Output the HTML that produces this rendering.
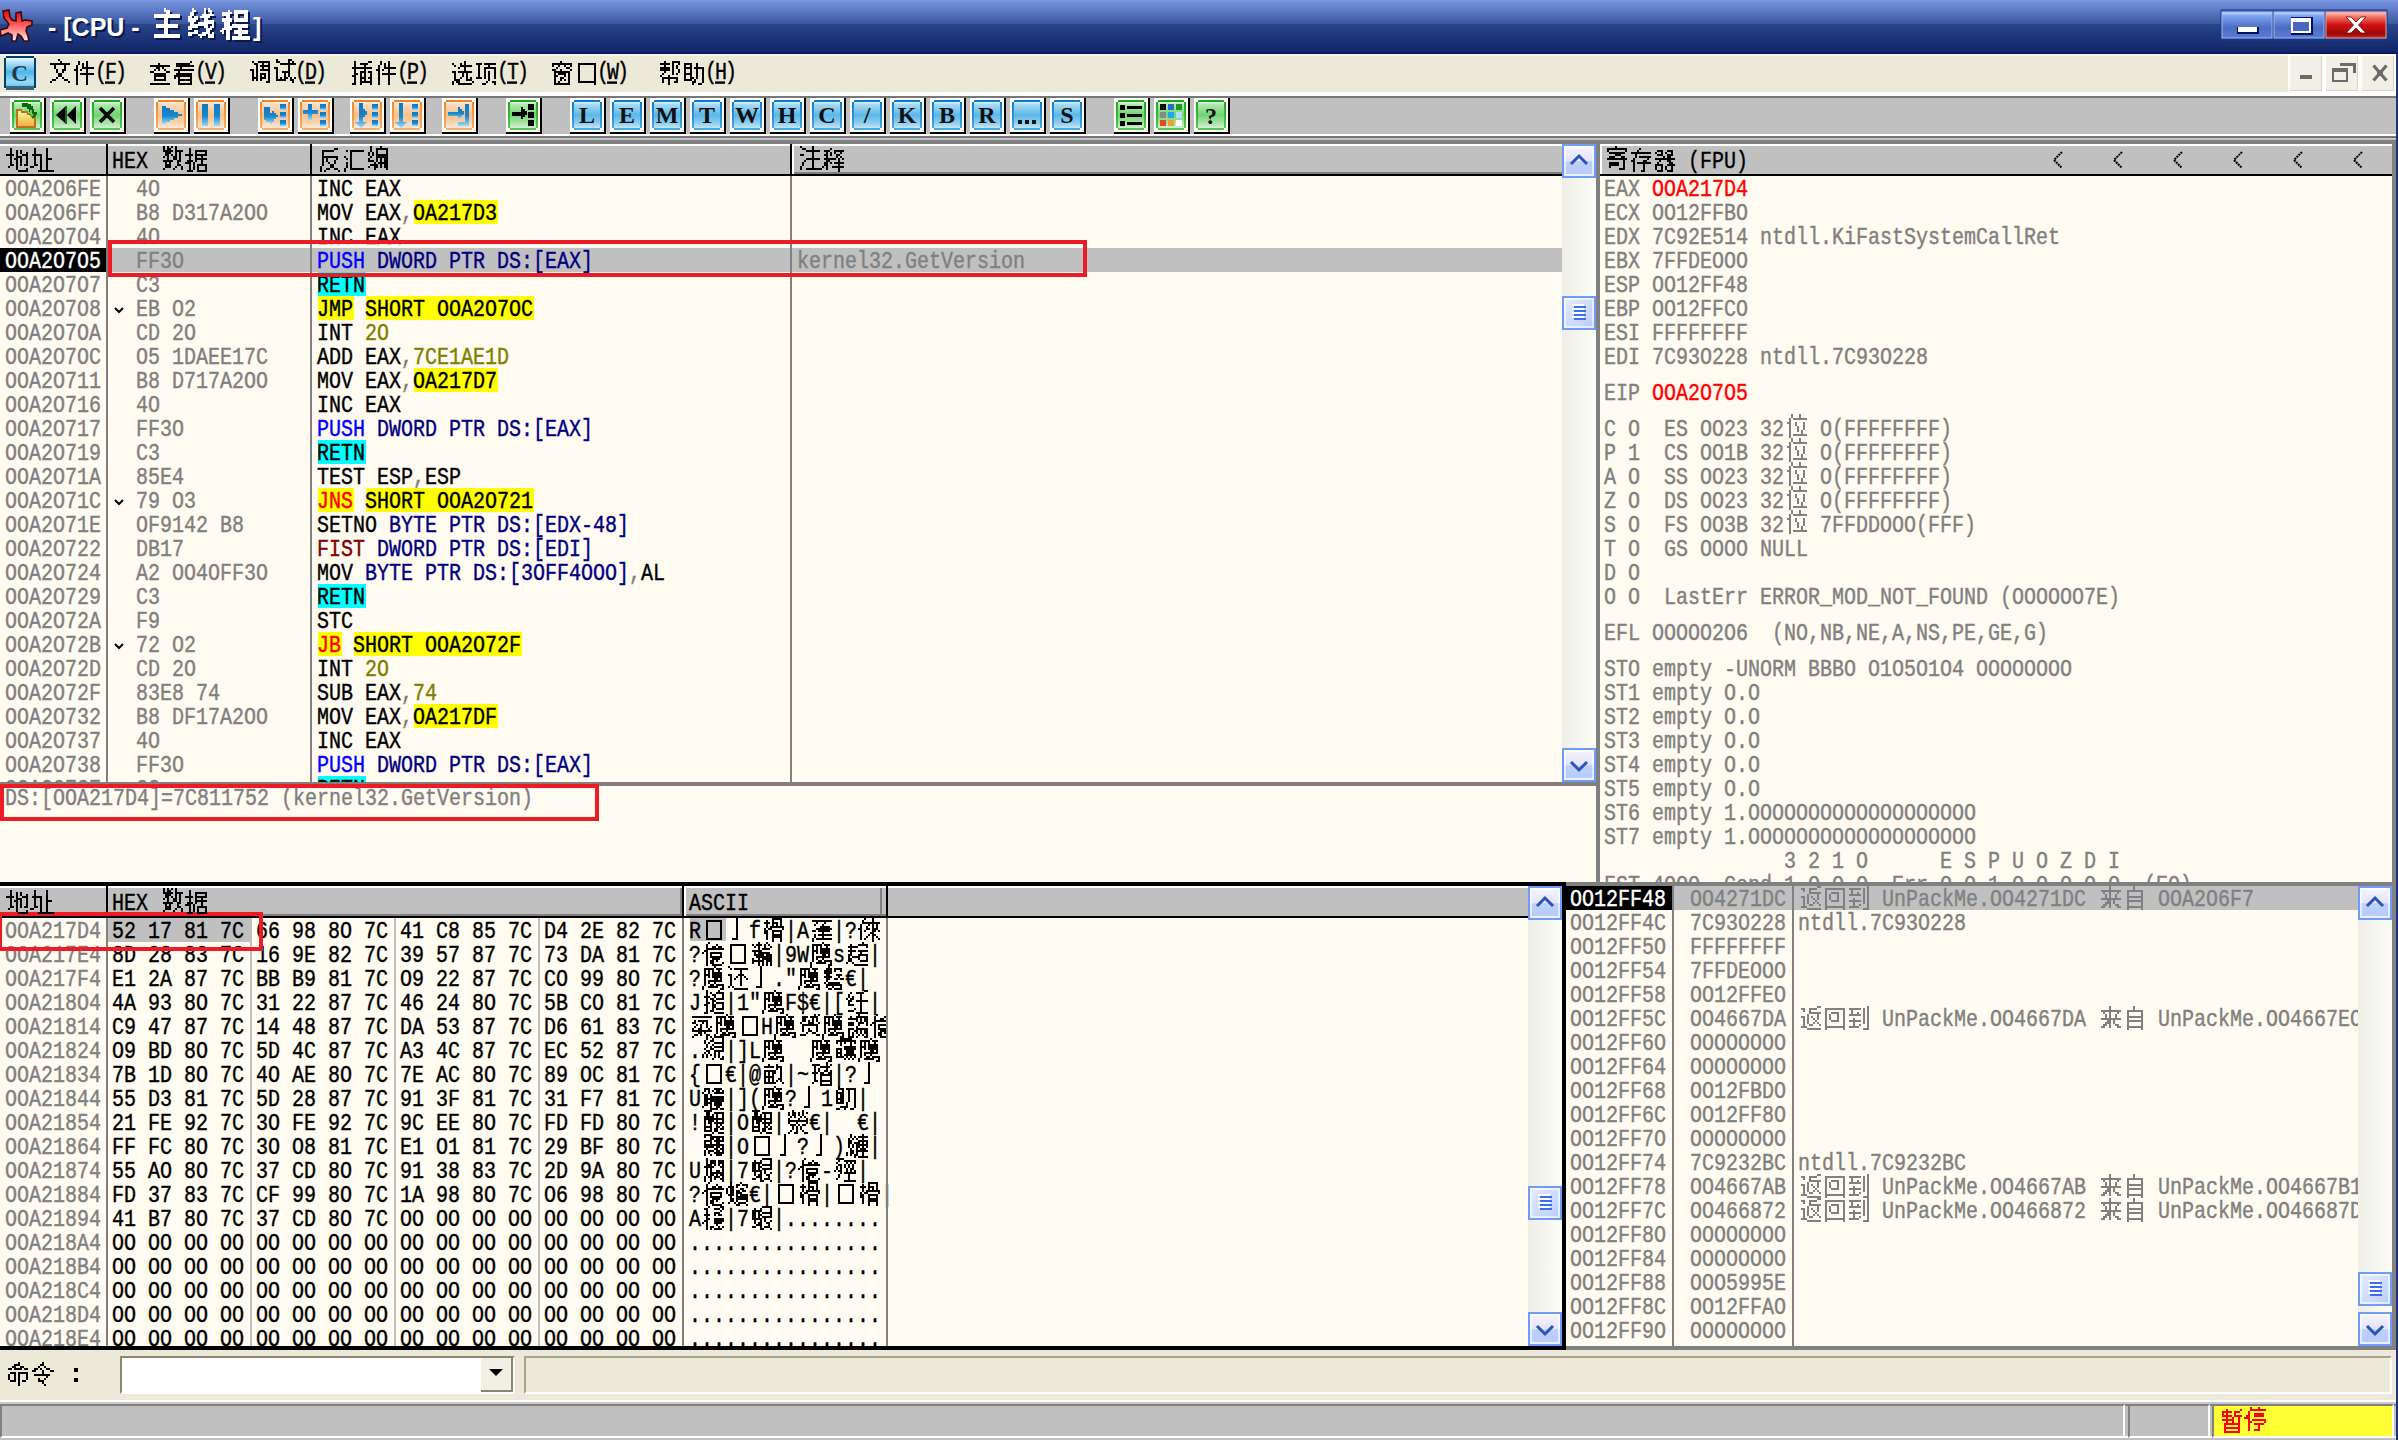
<!DOCTYPE html><html><head><meta charset="utf-8"><title>CPU</title><style>*{margin:0;padding:0}
html,body{width:2398px;height:1440px;overflow:hidden;background:#ECE9D8}
body{position:relative}
.a{position:absolute;box-sizing:content-box}
.t{position:absolute;font-family:"Liberation Mono",monospace;font-size:20px;line-height:20px;white-space:pre;-webkit-text-stroke-width:0.35px;transform:scaleY(1.2);transform-origin:0 0}
u{text-decoration:underline;text-underline-offset:2px}
</style></head><body><svg class="a" style="left:0;top:0" width="0" height="0"><defs><linearGradient id="sbt" x1="0" y1="0" x2="1" y2="0"><stop offset="0" stop-color="#EEEDE6"/><stop offset="1" stop-color="#FDFDF8"/></linearGradient>
<linearGradient id="sbb" x1="0" y1="0" x2="0" y2="1"><stop offset="0" stop-color="#FFFFFF"/><stop offset="0.12" stop-color="#F2F0FC"/><stop offset="0.5" stop-color="#E4E4FA"/><stop offset="0.52" stop-color="#BED0FA"/><stop offset="0.88" stop-color="#B8CAF8"/><stop offset="1" stop-color="#E0E8FC"/></linearGradient>
<linearGradient id="sbth" x1="0" y1="0" x2="1" y2="1"><stop offset="0" stop-color="#E8ECFC"/><stop offset="1" stop-color="#B8CCF8"/></linearGradient></defs></svg><div class="a" style="left:0;top:0;width:2398px;height:54px;background:linear-gradient(to bottom,#7B9BE2 0px,#6F8BD6 3px,#5F7DC8 10px,#4C68B4 17px,#3A5A9C 23.5px,#2A468B 24px,#233E83 30px,#1A3276 40px,#13286B 51px,#0A1B60 53px,#001060 54px)"></div><svg class="a" style="left:0;top:0" width="34" height="44" viewBox="0 0 34 44">
<defs><linearGradient id="bug" x1="0" y1="10" x2="0" y2="41" gradientUnits="userSpaceOnUse"><stop offset="0" stop-color="#E80000"/><stop offset="0.5" stop-color="#FF6060"/><stop offset="1" stop-color="#FFE8E8"/></linearGradient></defs>
<path d="M3 11 L9 10 L10 17 L12 20 L16 21 L16 13 L21 12 L22 21 L25 20 L32 21 L32 25 L27 27 L26 31 L28 36 L29 41 L24 41 L21 36 L18 34 L16 41 L12 41 L12 35 L8 33 L1 36 L0 30 L7 28 L9 24 L4 18 Z" fill="url(#bug)" stroke="#3A0A0A" stroke-width="1.6"/>
</svg><div class="a" style="left:50px;top:14px;font:bold 25px/30px 'Liberation Sans',sans-serif;color:#0A1850;white-space:pre">- [CPU -</div><div class="a" style="left:255px;top:14px;font:bold 25px/30px 'Liberation Sans',sans-serif;color:#0A1850;white-space:pre">]</div><div class="a" style="left:48px;top:12px;font:bold 25px/30px 'Liberation Sans',sans-serif;color:#FFFFFF;white-space:pre">- [CPU -</div><div class="a" style="left:253px;top:12px;font:bold 25px/30px 'Liberation Sans',sans-serif;color:#FFFFFF;white-space:pre">]</div><svg class="a" style="left:154px;top:10px" width="34" height="34"><path fill="#0A1850" d="M12 0h2v2h-2zM12 2h6v2h-6zM14 4h4v2h-4zM2 6h26v2h-26zM2 8h26v2h-26zM12 10h4v2h-4zM12 12h4v2h-4zM12 14h4v2h-4zM4 16h22v2h-22zM4 18h22v2h-22zM12 20h4v2h-4zM12 22h4v2h-4zM12 24h4v2h-4zM2 26h26v2h-26zM2 28h26v2h-26z"/></svg><svg class="a" style="left:188px;top:10px" width="34" height="34"><path fill="#0A1850" d="M6 0h2v2h-2zM18 0h2v2h-2zM22 0h2v2h-2zM6 2h4v2h-4zM18 2h2v2h-2zM22 2h4v2h-4zM4 4h4v2h-4zM18 4h2v2h-2zM24 4h2v2h-2zM4 6h4v2h-4zM16 6h12v2h-12zM2 8h4v2h-4zM8 8h4v2h-4zM14 8h10v2h-10zM2 10h10v2h-10zM18 10h4v2h-4zM2 12h8v2h-8zM18 12h10v2h-10zM4 14h4v2h-4zM12 14h16v2h-16zM4 16h18v2h-18zM26 16h2v2h-2zM2 18h10v2h-10zM18 18h4v2h-4zM24 18h4v2h-4zM2 20h4v2h-4zM20 20h6v2h-6zM8 22h4v2h-4zM20 22h4v2h-4zM2 24h10v2h-10zM16 24h8v2h-8zM26 24h2v2h-2zM2 26h4v2h-4zM12 26h8v2h-8zM22 26h6v2h-6zM14 28h2v2h-2zM22 28h6v2h-6z"/></svg><svg class="a" style="left:222px;top:10px" width="34" height="34"><path fill="#0A1850" d="M8 2h2v2h-2zM14 2h14v2h-14zM2 4h10v2h-10zM14 4h14v2h-14zM2 6h8v2h-8zM14 6h4v2h-4zM24 6h4v2h-4zM6 8h4v2h-4zM14 8h4v2h-4zM24 8h4v2h-4zM2 10h10v2h-10zM14 10h14v2h-14zM2 12h10v2h-10zM14 12h14v2h-14zM4 14h6v2h-6zM4 16h6v2h-6zM12 16h16v2h-16zM4 18h24v2h-24zM2 20h10v2h-10zM18 20h4v2h-4zM0 22h4v2h-4zM6 22h4v2h-4zM14 22h14v2h-14zM2 24h2v2h-2zM6 24h4v2h-4zM14 24h14v2h-14zM6 26h4v2h-4zM18 26h4v2h-4zM6 28h4v2h-4zM12 28h18v2h-18zM6 30h4v2h-4zM12 30h18v2h-18z"/></svg><svg class="a" style="left:152px;top:8px" width="34" height="34"><path fill="#FFFFFF" d="M12 0h2v2h-2zM12 2h6v2h-6zM14 4h4v2h-4zM2 6h26v2h-26zM2 8h26v2h-26zM12 10h4v2h-4zM12 12h4v2h-4zM12 14h4v2h-4zM4 16h22v2h-22zM4 18h22v2h-22zM12 20h4v2h-4zM12 22h4v2h-4zM12 24h4v2h-4zM2 26h26v2h-26zM2 28h26v2h-26z"/></svg><svg class="a" style="left:186px;top:8px" width="34" height="34"><path fill="#FFFFFF" d="M6 0h2v2h-2zM18 0h2v2h-2zM22 0h2v2h-2zM6 2h4v2h-4zM18 2h2v2h-2zM22 2h4v2h-4zM4 4h4v2h-4zM18 4h2v2h-2zM24 4h2v2h-2zM4 6h4v2h-4zM16 6h12v2h-12zM2 8h4v2h-4zM8 8h4v2h-4zM14 8h10v2h-10zM2 10h10v2h-10zM18 10h4v2h-4zM2 12h8v2h-8zM18 12h10v2h-10zM4 14h4v2h-4zM12 14h16v2h-16zM4 16h18v2h-18zM26 16h2v2h-2zM2 18h10v2h-10zM18 18h4v2h-4zM24 18h4v2h-4zM2 20h4v2h-4zM20 20h6v2h-6zM8 22h4v2h-4zM20 22h4v2h-4zM2 24h10v2h-10zM16 24h8v2h-8zM26 24h2v2h-2zM2 26h4v2h-4zM12 26h8v2h-8zM22 26h6v2h-6zM14 28h2v2h-2zM22 28h6v2h-6z"/></svg><svg class="a" style="left:220px;top:8px" width="34" height="34"><path fill="#FFFFFF" d="M8 2h2v2h-2zM14 2h14v2h-14zM2 4h10v2h-10zM14 4h14v2h-14zM2 6h8v2h-8zM14 6h4v2h-4zM24 6h4v2h-4zM6 8h4v2h-4zM14 8h4v2h-4zM24 8h4v2h-4zM2 10h10v2h-10zM14 10h14v2h-14zM2 12h10v2h-10zM14 12h14v2h-14zM4 14h6v2h-6zM4 16h6v2h-6zM12 16h16v2h-16zM4 18h24v2h-24zM2 20h10v2h-10zM18 20h4v2h-4zM0 22h4v2h-4zM6 22h4v2h-4zM14 22h14v2h-14zM2 24h2v2h-2zM6 24h4v2h-4zM14 24h14v2h-14zM6 26h4v2h-4zM18 26h4v2h-4zM6 28h4v2h-4zM12 28h18v2h-18zM6 30h4v2h-4zM12 30h18v2h-18z"/></svg><svg class="a" style="left:2218px;top:8px" width="172" height="34" viewBox="0 0 172 34">
<defs>
<linearGradient id="wb" x1="0" y1="0" x2="0" y2="1"><stop offset="0" stop-color="#C8DCFF"/><stop offset="0.15" stop-color="#7FA2F0"/><stop offset="0.6" stop-color="#4D6CC4"/><stop offset="1" stop-color="#5A7CD6"/></linearGradient>
<linearGradient id="wc" x1="0" y1="0" x2="0" y2="1"><stop offset="0" stop-color="#FFC8C0"/><stop offset="0.2" stop-color="#F07060"/><stop offset="0.5" stop-color="#D01010"/><stop offset="0.85" stop-color="#9A0808"/><stop offset="1" stop-color="#C03030"/></linearGradient>
</defs>
<rect x="2" y="1" width="168" height="32" rx="2" fill="#1B3A8C" opacity="0.6"/>
<rect x="4" y="4" width="50" height="26" fill="url(#wb)" stroke="#9DB8F2" stroke-width="1"/>
<rect x="56" y="4" width="50" height="26" fill="url(#wb)" stroke="#9DB8F2" stroke-width="1"/>
<rect x="108" y="4" width="60" height="26" fill="url(#wc)" stroke="#F0A0A0" stroke-width="1"/>
<rect x="19" y="19" width="22" height="7" fill="#001060"/><rect x="20" y="19" width="19" height="5" fill="#fff"/>
<rect x="73" y="9" width="22" height="18" fill="#001060"/><rect x="73" y="10" width="20" height="15" fill="#fff"/><rect x="75" y="14" width="16" height="9" fill="#4A66BE"/>
<path d="M128 9 L133 9 L138 14 L143 9 L148 9 L140.5 17 L148 25 L143 25 L138 20 L133 25 L128 25 L135.5 17 Z" fill="#fff" stroke="#700000" stroke-width="0.8"/>
</svg><div class="a" style="left:2396px;top:54px;width:2px;height:1386px;background:#1F3278;"></div><div class="a" style="left:0px;top:54px;width:2396px;height:38px;background:#ECE9D8;"></div><div class="a" style="left:0px;top:54px;width:2396px;height:2px;background:#F8F5E6;"></div><svg class="a" style="left:4px;top:56px" width="32" height="34" viewBox="0 0 32 34">
<defs><linearGradient id="ci" x1="0" y1="0" x2="0" y2="1"><stop offset="0" stop-color="#E6F6FE"/><stop offset="0.15" stop-color="#B8E2F8"/><stop offset="0.5" stop-color="#4DB5EA"/><stop offset="0.85" stop-color="#9ED8F4"/><stop offset="1" stop-color="#6CC8F2"/></linearGradient></defs>
<rect x="2" y="0" width="28" height="34" fill="#003F66"/><rect x="0" y="2" width="32" height="30" fill="#003F66"/>
<rect x="2" y="2" width="28" height="28" fill="url(#ci)"/>
<rect x="2" y="30" width="28" height="4" fill="#3E6577"/>
<text x="15.5" y="25" text-anchor="middle" font-family="Liberation Serif" font-weight="bold" font-size="23" fill="#243848">C</text>
</svg><div class="t" style="left:95px;top:61px;color:#000;letter-spacing:-2px">(<u>F</u>)</div><div class="t" style="left:195px;top:61px;color:#000;letter-spacing:-2px">(<u>V</u>)</div><div class="t" style="left:295px;top:61px;color:#000;letter-spacing:-2px">(<u>D</u>)</div><div class="t" style="left:397px;top:61px;color:#000;letter-spacing:-2px">(<u>P</u>)</div><div class="t" style="left:497px;top:61px;color:#000;letter-spacing:-2px">(<u>T</u>)</div><div class="t" style="left:597px;top:61px;color:#000;letter-spacing:-2px">(<u>W</u>)</div><div class="t" style="left:705px;top:61px;color:#000;letter-spacing:-2px">(<u>H</u>)</div><div class="a" style="left:2288px;top:54px;width:108px;height:38px;background:#FFFFFF;"></div><div class="a" style="left:2290px;top:56px;width:31px;height:34px;background:#F2F0E6;border-right:1px solid #D8D5C8;border-bottom:1px solid #D8D5C8"></div><div class="a" style="left:2326px;top:56px;width:31px;height:34px;background:#F2F0E6;border-right:1px solid #D8D5C8;border-bottom:1px solid #D8D5C8"></div><div class="a" style="left:2362px;top:56px;width:31px;height:34px;background:#F2F0E6;border-right:1px solid #D8D5C8;border-bottom:1px solid #D8D5C8"></div><svg class="a" style="left:2290px;top:56px" width="106" height="34" viewBox="0 0 106 34">
<rect x="10" y="19" width="12" height="4" fill="#6B6B6B"/>
<rect x="50" y="7" width="16" height="3" fill="#6B6B6B"/><rect x="63" y="7" width="3" height="10" fill="#6B6B6B"/>
<rect x="43" y="13" width="14" height="12" fill="none" stroke="#6B6B6B" stroke-width="2"/><rect x="43" y="13" width="14" height="3" fill="#6B6B6B"/>
<path d="M83.5 9.5 L96.5 24.5 M96.5 9.5 L83.5 24.5" stroke="#6B6B6B" stroke-width="3.2"/><rect x="87" y="14" width="6" height="6" fill="#6B6B6B"/>
</svg><div class="a" style="left:2394px;top:54px;width:2px;height:38px;background:#FFFFFF;"></div><div class="a" style="left:0px;top:92px;width:2396px;height:4px;background:#FFFFFF;"></div><div class="a" style="left:0px;top:96px;width:2396px;height:2px;background:#777777;"></div><div class="a" style="left:0px;top:98px;width:2396px;height:36px;background:#C0C0C0;"></div><div class="a" style="left:0px;top:134px;width:2396px;height:2px;background:#FFFFFF;"></div><div class="a" style="left:0px;top:136px;width:2396px;height:2px;background:#777777;"></div><div class="a" style="left:0px;top:138px;width:2396px;height:2px;background:#C4C4C4;"></div><div class="a" style="left:0px;top:140px;width:2396px;height:4px;background:#808080;"></div><svg class="a" style="left:0;top:0" width="0" height="0"><defs><linearGradient id="tbg" x1="0" y1="0" x2="0" y2="1"><stop offset="0" stop-color="#12A812"/><stop offset="1" stop-color="#58C858"/></linearGradient><linearGradient id="tgg" x1="0" y1="0" x2="0" y2="1"><stop offset="0" stop-color="#E8F8E8"/><stop offset="0.1" stop-color="#B0E8B0"/><stop offset="0.5" stop-color="#70D470"/><stop offset="0.8" stop-color="#A8E4A8"/><stop offset="1" stop-color="#D0F2D0"/></linearGradient><linearGradient id="tbo" x1="0" y1="0" x2="0" y2="1"><stop offset="0" stop-color="#F08220"/><stop offset="1" stop-color="#F6B070"/></linearGradient><linearGradient id="tgo" x1="0" y1="0" x2="0" y2="1"><stop offset="0" stop-color="#FDF2E6"/><stop offset="0.1" stop-color="#FADCC0"/><stop offset="0.5" stop-color="#F8C08A"/><stop offset="0.8" stop-color="#FAD4B0"/><stop offset="1" stop-color="#FDEAD8"/></linearGradient><linearGradient id="tbb" x1="0" y1="0" x2="0" y2="1"><stop offset="0" stop-color="#0A7AC8"/><stop offset="1" stop-color="#4AAAE2"/></linearGradient><linearGradient id="tgb" x1="0" y1="0" x2="0" y2="1"><stop offset="0" stop-color="#DCF2FC"/><stop offset="0.1" stop-color="#A8DAF4"/><stop offset="0.5" stop-color="#5CB8E8"/><stop offset="0.8" stop-color="#8CCCF0"/><stop offset="1" stop-color="#C4E6F8"/></linearGradient><linearGradient id="tbl" x1="0" y1="0" x2="0" y2="1"><stop offset="0" stop-color="#0E78C4"/><stop offset="0.55" stop-color="#1A86CC"/><stop offset="1" stop-color="#9ADCFF"/></linearGradient><linearGradient id="tfo" x1="0" y1="0" x2="0" y2="1"><stop offset="0" stop-color="#FFF6A0"/><stop offset="1" stop-color="#F0B040"/></linearGradient></defs></svg><div class="a" style="left:10px;top:98px;width:34px;height:34px;border-top:2px solid #fff;border-left:2px solid #fff;background:#FFFBF0"></div><div class="a" style="left:44px;top:98px;width:2px;height:36px;background:#000;"></div><div class="a" style="left:10px;top:132px;width:36px;height:2px;background:#000;"></div><svg class="a" style="left:12px;top:100px" width="30" height="30" viewBox="0 0 30 30"><path d="M2 0H28V2H30V28H28V30H2V28H0V2H2Z" fill="url(#tbg)"/><rect x="2" y="2" width="26" height="26" fill="url(#tgg)"/><path d="M4 9H10V11H16V13H24V28H4Z" fill="#C07018"/><path d="M6 11H9V13H15V15H22V26H6Z" fill="url(#tfo)"/><path d="M10 3H16V4H19V6H21V9H22V12H25V14L21 19L17 14H19V12H17V9H15V7H10Z" fill="#0A6A0A"/><path d="M18 10H20V14H22L20 17L18 14Z" fill="#60D060"/></svg><div class="a" style="left:50px;top:98px;width:34px;height:34px;border-top:2px solid #fff;border-left:2px solid #fff;background:#FFFBF0"></div><div class="a" style="left:84px;top:98px;width:2px;height:36px;background:#000;"></div><div class="a" style="left:50px;top:132px;width:36px;height:2px;background:#000;"></div><svg class="a" style="left:52px;top:100px" width="30" height="30" viewBox="0 0 30 30"><path d="M2 0H28V2H30V28H28V30H2V28H0V2H2Z" fill="url(#tbg)"/><rect x="2" y="2" width="26" height="26" fill="url(#tgg)"/><path d="M4 15L14 6V24Z M15 15L24 6V24Z" fill="#000"/><rect x="13" y="6" width="2" height="18" fill="#2A5A2A"/></svg><div class="a" style="left:90px;top:98px;width:34px;height:34px;border-top:2px solid #fff;border-left:2px solid #fff;background:#FFFBF0"></div><div class="a" style="left:124px;top:98px;width:2px;height:36px;background:#000;"></div><div class="a" style="left:90px;top:132px;width:36px;height:2px;background:#000;"></div><svg class="a" style="left:92px;top:100px" width="30" height="30" viewBox="0 0 30 30"><path d="M2 0H28V2H30V28H28V30H2V28H0V2H2Z" fill="url(#tbg)"/><rect x="2" y="2" width="26" height="26" fill="url(#tgg)"/><path d="M8 8L22 22M22 8L8 22" stroke="#000" stroke-width="3.5"/></svg><div class="a" style="left:154px;top:98px;width:34px;height:34px;border-top:2px solid #fff;border-left:2px solid #fff;background:#FFFBF0"></div><div class="a" style="left:188px;top:98px;width:2px;height:36px;background:#000;"></div><div class="a" style="left:154px;top:132px;width:36px;height:2px;background:#000;"></div><svg class="a" style="left:156px;top:100px" width="30" height="30" viewBox="0 0 30 30"><path d="M2 0H28V2H30V28H28V30H2V28H0V2H2Z" fill="url(#tbo)"/><rect x="2" y="2" width="26" height="26" fill="url(#tgo)"/><path d="M6 6H10V8H14V10H18V12H22V14H26V16H22V18H18V20H14V22H10V24H6Z" fill="url(#tbl)"/></svg><div class="a" style="left:194px;top:98px;width:34px;height:34px;border-top:2px solid #fff;border-left:2px solid #fff;background:#FFFBF0"></div><div class="a" style="left:228px;top:98px;width:2px;height:36px;background:#000;"></div><div class="a" style="left:194px;top:132px;width:36px;height:2px;background:#000;"></div><svg class="a" style="left:196px;top:100px" width="30" height="30" viewBox="0 0 30 30"><path d="M2 0H28V2H30V28H28V30H2V28H0V2H2Z" fill="url(#tbo)"/><rect x="2" y="2" width="26" height="26" fill="url(#tgo)"/><rect x="6" y="4" width="6" height="22" fill="url(#tbl)"/><rect x="18" y="4" width="6" height="22" fill="url(#tbl)"/></svg><div class="a" style="left:258px;top:98px;width:34px;height:34px;border-top:2px solid #fff;border-left:2px solid #fff;background:#FFFBF0"></div><div class="a" style="left:292px;top:98px;width:2px;height:36px;background:#000;"></div><div class="a" style="left:258px;top:132px;width:36px;height:2px;background:#000;"></div><svg class="a" style="left:260px;top:100px" width="30" height="30" viewBox="0 0 30 30"><path d="M2 0H28V2H30V28H28V30H2V28H0V2H2Z" fill="url(#tbo)"/><rect x="2" y="2" width="26" height="26" fill="url(#tgo)"/><rect x="20" y="4" width="6" height="6" fill="url(#tbl)"/><rect x="20" y="12" width="6" height="6" fill="url(#tbl)"/><rect x="20" y="20" width="6" height="6" fill="url(#tbl)"/><path d="M4 7H10V13H12V11H14V13H16V15H18V17H16V19H14V22H12V24H10V22H6V20H4Z" fill="url(#tbl)"/></svg><div class="a" style="left:298px;top:98px;width:34px;height:34px;border-top:2px solid #fff;border-left:2px solid #fff;background:#FFFBF0"></div><div class="a" style="left:332px;top:98px;width:2px;height:36px;background:#000;"></div><div class="a" style="left:298px;top:132px;width:36px;height:2px;background:#000;"></div><svg class="a" style="left:300px;top:100px" width="30" height="30" viewBox="0 0 30 30"><path d="M2 0H28V2H30V28H28V30H2V28H0V2H2Z" fill="url(#tbo)"/><rect x="2" y="2" width="26" height="26" fill="url(#tgo)"/><rect x="20" y="4" width="6" height="6" fill="url(#tbl)"/><rect x="20" y="12" width="6" height="6" fill="url(#tbl)"/><rect x="20" y="20" width="6" height="6" fill="url(#tbl)"/><path d="M8 4H12V10H18V14H12V20H8V14H3V10H8Z" fill="url(#tbl)"/></svg><div class="a" style="left:350px;top:98px;width:34px;height:34px;border-top:2px solid #fff;border-left:2px solid #fff;background:#FFFBF0"></div><div class="a" style="left:384px;top:98px;width:2px;height:36px;background:#000;"></div><div class="a" style="left:350px;top:132px;width:36px;height:2px;background:#000;"></div><svg class="a" style="left:352px;top:100px" width="30" height="30" viewBox="0 0 30 30"><path d="M2 0H28V2H30V28H28V30H2V28H0V2H2Z" fill="url(#tbo)"/><rect x="2" y="2" width="26" height="26" fill="url(#tgo)"/><rect x="20" y="4" width="6" height="6" fill="url(#tbl)"/><rect x="20" y="12" width="6" height="6" fill="url(#tbl)"/><rect x="20" y="20" width="6" height="6" fill="url(#tbl)"/><path d="M7 3H11V9H13V11H15V15H13V17H11V22H15L9 28L3 22H7Z" fill="url(#tbl)"/></svg><div class="a" style="left:390px;top:98px;width:34px;height:34px;border-top:2px solid #fff;border-left:2px solid #fff;background:#FFFBF0"></div><div class="a" style="left:424px;top:98px;width:2px;height:36px;background:#000;"></div><div class="a" style="left:390px;top:132px;width:36px;height:2px;background:#000;"></div><svg class="a" style="left:392px;top:100px" width="30" height="30" viewBox="0 0 30 30"><path d="M2 0H28V2H30V28H28V30H2V28H0V2H2Z" fill="url(#tbo)"/><rect x="2" y="2" width="26" height="26" fill="url(#tgo)"/><rect x="20" y="4" width="6" height="6" fill="url(#tbl)"/><rect x="20" y="12" width="6" height="6" fill="url(#tbl)"/><rect x="20" y="20" width="6" height="6" fill="url(#tbl)"/><path d="M7 3H11V22H15L9 28L3 22H7Z" fill="url(#tbl)"/></svg><div class="a" style="left:442px;top:98px;width:34px;height:34px;border-top:2px solid #fff;border-left:2px solid #fff;background:#FFFBF0"></div><div class="a" style="left:476px;top:98px;width:2px;height:36px;background:#000;"></div><div class="a" style="left:442px;top:132px;width:36px;height:2px;background:#000;"></div><svg class="a" style="left:444px;top:100px" width="30" height="30" viewBox="0 0 30 30"><path d="M2 0H28V2H30V28H28V30H2V28H0V2H2Z" fill="url(#tbo)"/><rect x="2" y="2" width="26" height="26" fill="url(#tgo)"/><path d="M4 12H14V7H16V9H18V11H20V15H18V17H16V19H14V16H4Z" fill="url(#tbl)"/><path d="M21 4H25V26H14V22H21Z" fill="url(#tbl)"/></svg><div class="a" style="left:506px;top:98px;width:34px;height:34px;border-top:2px solid #fff;border-left:2px solid #fff;background:#FFFBF0"></div><div class="a" style="left:540px;top:98px;width:2px;height:36px;background:#000;"></div><div class="a" style="left:506px;top:132px;width:36px;height:2px;background:#000;"></div><svg class="a" style="left:508px;top:100px" width="30" height="30" viewBox="0 0 30 30"><path d="M2 0H28V2H30V28H28V30H2V28H0V2H2Z" fill="url(#tbg)"/><rect x="2" y="2" width="26" height="26" fill="url(#tgg)"/><path d="M4 12H13V7H15V9H17V11H19V15H17V17H15V19H13V16H4Z" fill="#000"/><rect x="20" y="4" width="6" height="6" fill="#000"/><rect x="20" y="12" width="6" height="6" fill="#000"/><rect x="20" y="20" width="6" height="6" fill="#000"/></svg><div class="a" style="left:570px;top:98px;width:34px;height:34px;border-top:2px solid #fff;border-left:2px solid #fff;background:#FFFBF0"></div><div class="a" style="left:604px;top:98px;width:2px;height:36px;background:#000;"></div><div class="a" style="left:570px;top:132px;width:36px;height:2px;background:#000;"></div><svg class="a" style="left:572px;top:100px" width="30" height="30" viewBox="0 0 30 30"><path d="M2 0H28V2H30V28H28V30H2V28H0V2H2Z" fill="url(#tbb)"/><rect x="2" y="2" width="26" height="26" fill="url(#tgb)"/><text x="15" y="23" text-anchor="middle" font-family="Liberation Serif" font-weight="bold" font-size="24" fill="#111">L</text></svg><div class="a" style="left:610px;top:98px;width:34px;height:34px;border-top:2px solid #fff;border-left:2px solid #fff;background:#FFFBF0"></div><div class="a" style="left:644px;top:98px;width:2px;height:36px;background:#000;"></div><div class="a" style="left:610px;top:132px;width:36px;height:2px;background:#000;"></div><svg class="a" style="left:612px;top:100px" width="30" height="30" viewBox="0 0 30 30"><path d="M2 0H28V2H30V28H28V30H2V28H0V2H2Z" fill="url(#tbb)"/><rect x="2" y="2" width="26" height="26" fill="url(#tgb)"/><text x="15" y="23" text-anchor="middle" font-family="Liberation Serif" font-weight="bold" font-size="24" fill="#111">E</text></svg><div class="a" style="left:650px;top:98px;width:34px;height:34px;border-top:2px solid #fff;border-left:2px solid #fff;background:#FFFBF0"></div><div class="a" style="left:684px;top:98px;width:2px;height:36px;background:#000;"></div><div class="a" style="left:650px;top:132px;width:36px;height:2px;background:#000;"></div><svg class="a" style="left:652px;top:100px" width="30" height="30" viewBox="0 0 30 30"><path d="M2 0H28V2H30V28H28V30H2V28H0V2H2Z" fill="url(#tbb)"/><rect x="2" y="2" width="26" height="26" fill="url(#tgb)"/><text x="15" y="23" text-anchor="middle" font-family="Liberation Serif" font-weight="bold" font-size="24" fill="#111">M</text></svg><div class="a" style="left:690px;top:98px;width:34px;height:34px;border-top:2px solid #fff;border-left:2px solid #fff;background:#FFFBF0"></div><div class="a" style="left:724px;top:98px;width:2px;height:36px;background:#000;"></div><div class="a" style="left:690px;top:132px;width:36px;height:2px;background:#000;"></div><svg class="a" style="left:692px;top:100px" width="30" height="30" viewBox="0 0 30 30"><path d="M2 0H28V2H30V28H28V30H2V28H0V2H2Z" fill="url(#tbb)"/><rect x="2" y="2" width="26" height="26" fill="url(#tgb)"/><text x="15" y="23" text-anchor="middle" font-family="Liberation Serif" font-weight="bold" font-size="24" fill="#111">T</text></svg><div class="a" style="left:730px;top:98px;width:34px;height:34px;border-top:2px solid #fff;border-left:2px solid #fff;background:#FFFBF0"></div><div class="a" style="left:764px;top:98px;width:2px;height:36px;background:#000;"></div><div class="a" style="left:730px;top:132px;width:36px;height:2px;background:#000;"></div><svg class="a" style="left:732px;top:100px" width="30" height="30" viewBox="0 0 30 30"><path d="M2 0H28V2H30V28H28V30H2V28H0V2H2Z" fill="url(#tbb)"/><rect x="2" y="2" width="26" height="26" fill="url(#tgb)"/><text x="15" y="23" text-anchor="middle" font-family="Liberation Serif" font-weight="bold" font-size="24" fill="#111">W</text></svg><div class="a" style="left:770px;top:98px;width:34px;height:34px;border-top:2px solid #fff;border-left:2px solid #fff;background:#FFFBF0"></div><div class="a" style="left:804px;top:98px;width:2px;height:36px;background:#000;"></div><div class="a" style="left:770px;top:132px;width:36px;height:2px;background:#000;"></div><svg class="a" style="left:772px;top:100px" width="30" height="30" viewBox="0 0 30 30"><path d="M2 0H28V2H30V28H28V30H2V28H0V2H2Z" fill="url(#tbb)"/><rect x="2" y="2" width="26" height="26" fill="url(#tgb)"/><text x="15" y="23" text-anchor="middle" font-family="Liberation Serif" font-weight="bold" font-size="24" fill="#111">H</text></svg><div class="a" style="left:810px;top:98px;width:34px;height:34px;border-top:2px solid #fff;border-left:2px solid #fff;background:#FFFBF0"></div><div class="a" style="left:844px;top:98px;width:2px;height:36px;background:#000;"></div><div class="a" style="left:810px;top:132px;width:36px;height:2px;background:#000;"></div><svg class="a" style="left:812px;top:100px" width="30" height="30" viewBox="0 0 30 30"><path d="M2 0H28V2H30V28H28V30H2V28H0V2H2Z" fill="url(#tbb)"/><rect x="2" y="2" width="26" height="26" fill="url(#tgb)"/><text x="15" y="23" text-anchor="middle" font-family="Liberation Serif" font-weight="bold" font-size="24" fill="#111">C</text></svg><div class="a" style="left:850px;top:98px;width:34px;height:34px;border-top:2px solid #fff;border-left:2px solid #fff;background:#FFFBF0"></div><div class="a" style="left:884px;top:98px;width:2px;height:36px;background:#000;"></div><div class="a" style="left:850px;top:132px;width:36px;height:2px;background:#000;"></div><svg class="a" style="left:852px;top:100px" width="30" height="30" viewBox="0 0 30 30"><path d="M2 0H28V2H30V28H28V30H2V28H0V2H2Z" fill="url(#tbb)"/><rect x="2" y="2" width="26" height="26" fill="url(#tgb)"/><text x="15" y="23" text-anchor="middle" font-family="Liberation Serif" font-weight="bold" font-size="24" fill="#111">/</text></svg><div class="a" style="left:890px;top:98px;width:34px;height:34px;border-top:2px solid #fff;border-left:2px solid #fff;background:#FFFBF0"></div><div class="a" style="left:924px;top:98px;width:2px;height:36px;background:#000;"></div><div class="a" style="left:890px;top:132px;width:36px;height:2px;background:#000;"></div><svg class="a" style="left:892px;top:100px" width="30" height="30" viewBox="0 0 30 30"><path d="M2 0H28V2H30V28H28V30H2V28H0V2H2Z" fill="url(#tbb)"/><rect x="2" y="2" width="26" height="26" fill="url(#tgb)"/><text x="15" y="23" text-anchor="middle" font-family="Liberation Serif" font-weight="bold" font-size="24" fill="#111">K</text></svg><div class="a" style="left:930px;top:98px;width:34px;height:34px;border-top:2px solid #fff;border-left:2px solid #fff;background:#FFFBF0"></div><div class="a" style="left:964px;top:98px;width:2px;height:36px;background:#000;"></div><div class="a" style="left:930px;top:132px;width:36px;height:2px;background:#000;"></div><svg class="a" style="left:932px;top:100px" width="30" height="30" viewBox="0 0 30 30"><path d="M2 0H28V2H30V28H28V30H2V28H0V2H2Z" fill="url(#tbb)"/><rect x="2" y="2" width="26" height="26" fill="url(#tgb)"/><text x="15" y="23" text-anchor="middle" font-family="Liberation Serif" font-weight="bold" font-size="24" fill="#111">B</text></svg><div class="a" style="left:970px;top:98px;width:34px;height:34px;border-top:2px solid #fff;border-left:2px solid #fff;background:#FFFBF0"></div><div class="a" style="left:1004px;top:98px;width:2px;height:36px;background:#000;"></div><div class="a" style="left:970px;top:132px;width:36px;height:2px;background:#000;"></div><svg class="a" style="left:972px;top:100px" width="30" height="30" viewBox="0 0 30 30"><path d="M2 0H28V2H30V28H28V30H2V28H0V2H2Z" fill="url(#tbb)"/><rect x="2" y="2" width="26" height="26" fill="url(#tgb)"/><text x="15" y="23" text-anchor="middle" font-family="Liberation Serif" font-weight="bold" font-size="24" fill="#111">R</text></svg><div class="a" style="left:1010px;top:98px;width:34px;height:34px;border-top:2px solid #fff;border-left:2px solid #fff;background:#FFFBF0"></div><div class="a" style="left:1044px;top:98px;width:2px;height:36px;background:#000;"></div><div class="a" style="left:1010px;top:132px;width:36px;height:2px;background:#000;"></div><svg class="a" style="left:1012px;top:100px" width="30" height="30" viewBox="0 0 30 30"><path d="M2 0H28V2H30V28H28V30H2V28H0V2H2Z" fill="url(#tbb)"/><rect x="2" y="2" width="26" height="26" fill="url(#tgb)"/><rect x="6" y="20" width="4" height="4" fill="#111"/><rect x="13" y="20" width="4" height="4" fill="#111"/><rect x="20" y="20" width="4" height="4" fill="#111"/></svg><div class="a" style="left:1050px;top:98px;width:34px;height:34px;border-top:2px solid #fff;border-left:2px solid #fff;background:#FFFBF0"></div><div class="a" style="left:1084px;top:98px;width:2px;height:36px;background:#000;"></div><div class="a" style="left:1050px;top:132px;width:36px;height:2px;background:#000;"></div><svg class="a" style="left:1052px;top:100px" width="30" height="30" viewBox="0 0 30 30"><path d="M2 0H28V2H30V28H28V30H2V28H0V2H2Z" fill="url(#tbb)"/><rect x="2" y="2" width="26" height="26" fill="url(#tgb)"/><text x="15" y="23" text-anchor="middle" font-family="Liberation Serif" font-weight="bold" font-size="24" fill="#111">S</text></svg><div class="a" style="left:1114px;top:98px;width:34px;height:34px;border-top:2px solid #fff;border-left:2px solid #fff;background:#FFFBF0"></div><div class="a" style="left:1148px;top:98px;width:2px;height:36px;background:#000;"></div><div class="a" style="left:1114px;top:132px;width:36px;height:2px;background:#000;"></div><svg class="a" style="left:1116px;top:100px" width="30" height="30" viewBox="0 0 30 30"><path d="M2 0H28V2H30V28H28V30H2V28H0V2H2Z" fill="url(#tbg)"/><rect x="2" y="2" width="26" height="26" fill="url(#tgg)"/><rect x="4" y="5" width="5" height="5" fill="#000"/><rect x="11" y="6" width="15" height="3" fill="#000"/><rect x="4" y="13" width="5" height="5" fill="#000"/><rect x="11" y="14" width="15" height="3" fill="#000"/><rect x="4" y="21" width="5" height="5" fill="#000"/><rect x="11" y="22" width="15" height="3" fill="#000"/></svg><div class="a" style="left:1154px;top:98px;width:34px;height:34px;border-top:2px solid #fff;border-left:2px solid #fff;background:#FFFBF0"></div><div class="a" style="left:1188px;top:98px;width:2px;height:36px;background:#000;"></div><div class="a" style="left:1154px;top:132px;width:36px;height:2px;background:#000;"></div><svg class="a" style="left:1156px;top:100px" width="30" height="30" viewBox="0 0 30 30"><path d="M2 0H28V2H30V28H28V30H2V28H0V2H2Z" fill="url(#tbg)"/><rect x="2" y="2" width="26" height="26" fill="url(#tgg)"/><rect x="4" y="4" width="6" height="6" fill="#111"/><rect x="12" y="4" width="6" height="6" fill="#2A6CC8"/><rect x="20" y="4" width="6" height="6" fill="#1A9A1A"/><rect x="4" y="12" width="6" height="6" fill="#888"/><rect x="12" y="12" width="6" height="6" fill="#22A8E8"/><rect x="20" y="12" width="6" height="6" fill="#B0E0F8"/><rect x="4" y="20" width="6" height="6" fill="#E84A20"/><rect x="12" y="20" width="6" height="6" fill="#F0A030"/><rect x="20" y="20" width="6" height="6" fill="#FFF"/></svg><div class="a" style="left:1194px;top:98px;width:34px;height:34px;border-top:2px solid #fff;border-left:2px solid #fff;background:#FFFBF0"></div><div class="a" style="left:1228px;top:98px;width:2px;height:36px;background:#000;"></div><div class="a" style="left:1194px;top:132px;width:36px;height:2px;background:#000;"></div><svg class="a" style="left:1196px;top:100px" width="30" height="30" viewBox="0 0 30 30"><path d="M2 0H28V2H30V28H28V30H2V28H0V2H2Z" fill="url(#tbg)"/><rect x="2" y="2" width="26" height="26" fill="url(#tgg)"/><text x="15" y="24" text-anchor="middle" font-family="Liberation Serif" font-weight="bold" font-size="24" fill="#111">?</text></svg><div class="a" style="left:0px;top:144px;width:1562px;height:638px;background:#FFFBF0;"></div><div class="a" style="left:0px;top:144px;width:1562px;height:2px;background:#FFFFFF;"></div><div class="a" style="left:0px;top:146px;width:1562px;height:28px;background:#C0C0C0;"></div><div class="a" style="left:0px;top:174px;width:1562px;height:2px;background:#000;"></div><div class="a" style="left:106px;top:144px;width:2px;height:32px;background:#000;"></div><div class="a" style="left:310px;top:144px;width:2px;height:32px;background:#000;"></div><div class="a" style="left:790px;top:144px;width:2px;height:32px;background:#000;"></div><div class="t" style="left:112px;top:150px;color:#000">HEX</div><div class="a" style="left:792px;top:146px;width:2px;height:28px;background:#FFFFFF;"></div><div class="a" style="left:794px;top:172px;width:768px;height:2px;background:#808080;"></div><div class="t" style="left:5px;top:178px;color:#808080">OOA2O6FE</div><div class="t" style="left:136px;top:178px;color:#808080">4O</div><div class="t" style="left:317px;top:178px;color:#000">INC EAX</div><div class="t" style="left:5px;top:202px;color:#808080">OOA2O6FF</div><div class="t" style="left:136px;top:202px;color:#808080">B8 D317A2OO</div><div class="t" style="left:317px;top:202px;color:#000">MOV EAX</div><div class="t" style="left:401px;top:202px;color:#808080">,</div><div class="a" style="left:414px;top:200px;width:84px;height:24px;background:#FFFF00;"></div><div class="t" style="left:413px;top:202px;color:#000">OA217D3</div><div class="t" style="left:5px;top:226px;color:#808080">OOA2O7O4</div><div class="t" style="left:136px;top:226px;color:#808080">4O</div><div class="t" style="left:317px;top:226px;color:#000">INC EAX</div><div class="a" style="left:0px;top:248px;width:106px;height:24px;background:#000;"></div><div class="a" style="left:108px;top:248px;width:1454px;height:24px;background:#C0C0C0;"></div><div class="t" style="left:5px;top:250px;color:#FFF">OOA2O7O5</div><div class="t" style="left:797px;top:250px;color:#808080">kernel32.GetVersion</div><div class="t" style="left:136px;top:250px;color:#808080">FF3O</div><div class="t" style="left:317px;top:250px;color:#0000FF">PUSH</div><div class="t" style="left:377px;top:250px;color:#000080">DWORD PTR DS:[EAX]</div><div class="t" style="left:5px;top:274px;color:#808080">OOA2O7O7</div><div class="t" style="left:136px;top:274px;color:#808080">C3</div><div class="a" style="left:318px;top:272px;width:48px;height:24px;background:#00FFFF;"></div><div class="t" style="left:317px;top:274px;color:#000">RETN</div><div class="t" style="left:5px;top:298px;color:#808080">OOA2O7O8</div><svg class="a" style="left:113px;top:296px" width="12" height="24"><path d="M2 12 L6 16 L10 12" fill="none" stroke="#000" stroke-width="2"/></svg><div class="t" style="left:136px;top:298px;color:#808080">EB O2</div><div class="a" style="left:318px;top:296px;width:36px;height:24px;background:#FFFF00;"></div><div class="t" style="left:317px;top:298px;color:#000">JMP</div><div class="a" style="left:366px;top:296px;width:168px;height:24px;background:#FFFF00;"></div><div class="t" style="left:365px;top:298px;color:#000">SHORT OOA2O7OC</div><div class="t" style="left:5px;top:322px;color:#808080">OOA2O7OA</div><div class="t" style="left:136px;top:322px;color:#808080">CD 2O</div><div class="t" style="left:317px;top:322px;color:#000">INT</div><div class="t" style="left:365px;top:322px;color:#808000">2O</div><div class="t" style="left:5px;top:346px;color:#808080">OOA2O7OC</div><div class="t" style="left:136px;top:346px;color:#808080">O5 1DAEE17C</div><div class="t" style="left:317px;top:346px;color:#000">ADD EAX</div><div class="t" style="left:401px;top:346px;color:#808080">,</div><div class="t" style="left:413px;top:346px;color:#808000">7CE1AE1D</div><div class="t" style="left:5px;top:370px;color:#808080">OOA2O711</div><div class="t" style="left:136px;top:370px;color:#808080">B8 D717A2OO</div><div class="t" style="left:317px;top:370px;color:#000">MOV EAX</div><div class="t" style="left:401px;top:370px;color:#808080">,</div><div class="a" style="left:414px;top:368px;width:84px;height:24px;background:#FFFF00;"></div><div class="t" style="left:413px;top:370px;color:#000">OA217D7</div><div class="t" style="left:5px;top:394px;color:#808080">OOA2O716</div><div class="t" style="left:136px;top:394px;color:#808080">4O</div><div class="t" style="left:317px;top:394px;color:#000">INC EAX</div><div class="t" style="left:5px;top:418px;color:#808080">OOA2O717</div><div class="t" style="left:136px;top:418px;color:#808080">FF3O</div><div class="t" style="left:317px;top:418px;color:#0000FF">PUSH</div><div class="t" style="left:377px;top:418px;color:#000080">DWORD PTR DS:[EAX]</div><div class="t" style="left:5px;top:442px;color:#808080">OOA2O719</div><div class="t" style="left:136px;top:442px;color:#808080">C3</div><div class="a" style="left:318px;top:440px;width:48px;height:24px;background:#00FFFF;"></div><div class="t" style="left:317px;top:442px;color:#000">RETN</div><div class="t" style="left:5px;top:466px;color:#808080">OOA2O71A</div><div class="t" style="left:136px;top:466px;color:#808080">85E4</div><div class="t" style="left:317px;top:466px;color:#000">TEST ESP</div><div class="t" style="left:413px;top:466px;color:#808080">,</div><div class="t" style="left:425px;top:466px;color:#000">ESP</div><div class="t" style="left:5px;top:490px;color:#808080">OOA2O71C</div><svg class="a" style="left:113px;top:488px" width="12" height="24"><path d="M2 12 L6 16 L10 12" fill="none" stroke="#000" stroke-width="2"/></svg><div class="t" style="left:136px;top:490px;color:#808080">79 O3</div><div class="a" style="left:318px;top:488px;width:36px;height:24px;background:#FFFF00;"></div><div class="t" style="left:317px;top:490px;color:#FF0000">JNS</div><div class="a" style="left:366px;top:488px;width:168px;height:24px;background:#FFFF00;"></div><div class="t" style="left:365px;top:490px;color:#000">SHORT OOA2O721</div><div class="t" style="left:5px;top:514px;color:#808080">OOA2O71E</div><div class="t" style="left:136px;top:514px;color:#808080">OF9142 B8</div><div class="t" style="left:317px;top:514px;color:#000">SETNO</div><div class="t" style="left:389px;top:514px;color:#000080">BYTE PTR DS:[EDX-48]</div><div class="t" style="left:5px;top:538px;color:#808080">OOA2O722</div><div class="t" style="left:136px;top:538px;color:#808080">DB17</div><div class="t" style="left:317px;top:538px;color:#800000">FIST</div><div class="t" style="left:377px;top:538px;color:#000080">DWORD PTR DS:[EDI]</div><div class="t" style="left:5px;top:562px;color:#808080">OOA2O724</div><div class="t" style="left:136px;top:562px;color:#808080">A2 OO4OFF3O</div><div class="t" style="left:317px;top:562px;color:#000">MOV</div><div class="t" style="left:365px;top:562px;color:#000080">BYTE PTR DS:[3OFF4OOO]</div><div class="t" style="left:629px;top:562px;color:#808080">,</div><div class="t" style="left:641px;top:562px;color:#000">AL</div><div class="t" style="left:5px;top:586px;color:#808080">OOA2O729</div><div class="t" style="left:136px;top:586px;color:#808080">C3</div><div class="a" style="left:318px;top:584px;width:48px;height:24px;background:#00FFFF;"></div><div class="t" style="left:317px;top:586px;color:#000">RETN</div><div class="t" style="left:5px;top:610px;color:#808080">OOA2O72A</div><div class="t" style="left:136px;top:610px;color:#808080">F9</div><div class="t" style="left:317px;top:610px;color:#000">STC</div><div class="t" style="left:5px;top:634px;color:#808080">OOA2O72B</div><svg class="a" style="left:113px;top:632px" width="12" height="24"><path d="M2 12 L6 16 L10 12" fill="none" stroke="#000" stroke-width="2"/></svg><div class="t" style="left:136px;top:634px;color:#808080">72 O2</div><div class="a" style="left:318px;top:632px;width:24px;height:24px;background:#FFFF00;"></div><div class="t" style="left:317px;top:634px;color:#FF0000">JB</div><div class="a" style="left:354px;top:632px;width:168px;height:24px;background:#FFFF00;"></div><div class="t" style="left:353px;top:634px;color:#000">SHORT OOA2O72F</div><div class="t" style="left:5px;top:658px;color:#808080">OOA2O72D</div><div class="t" style="left:136px;top:658px;color:#808080">CD 2O</div><div class="t" style="left:317px;top:658px;color:#000">INT</div><div class="t" style="left:365px;top:658px;color:#808000">2O</div><div class="t" style="left:5px;top:682px;color:#808080">OOA2O72F</div><div class="t" style="left:136px;top:682px;color:#808080">83E8 74</div><div class="t" style="left:317px;top:682px;color:#000">SUB EAX</div><div class="t" style="left:401px;top:682px;color:#808080">,</div><div class="t" style="left:413px;top:682px;color:#808000">74</div><div class="t" style="left:5px;top:706px;color:#808080">OOA2O732</div><div class="t" style="left:136px;top:706px;color:#808080">B8 DF17A2OO</div><div class="t" style="left:317px;top:706px;color:#000">MOV EAX</div><div class="t" style="left:401px;top:706px;color:#808080">,</div><div class="a" style="left:414px;top:704px;width:84px;height:24px;background:#FFFF00;"></div><div class="t" style="left:413px;top:706px;color:#000">OA217DF</div><div class="t" style="left:5px;top:730px;color:#808080">OOA2O737</div><div class="t" style="left:136px;top:730px;color:#808080">4O</div><div class="t" style="left:317px;top:730px;color:#000">INC EAX</div><div class="t" style="left:5px;top:754px;color:#808080">OOA2O738</div><div class="t" style="left:136px;top:754px;color:#808080">FF3O</div><div class="t" style="left:317px;top:754px;color:#0000FF">PUSH</div><div class="t" style="left:377px;top:754px;color:#000080">DWORD PTR DS:[EAX]</div><div class="t" style="left:5px;top:778px;color:#808080">OOA2O73E</div><div class="t" style="left:136px;top:778px;color:#808080">C3</div><div class="a" style="left:318px;top:776px;width:48px;height:24px;background:#00FFFF;"></div><div class="t" style="left:317px;top:778px;color:#000">RETN</div><div class="a" style="left:106px;top:176px;width:2px;height:606px;background:#808080;"></div><div class="a" style="left:310px;top:176px;width:2px;height:606px;background:#808080;"></div><div class="a" style="left:790px;top:176px;width:2px;height:606px;background:#808080;"></div><div class="a" style="left:108px;top:240px;width:971px;height:29px;border:4px solid #ED1C24"></div><svg class="a" style="left:1562px;top:144px" width="34" height="638" viewBox="0 0 34 638"><rect x="0" y="0" width="34" height="638" fill="url(#sbt)"/><rect x="1" y="1" width="32" height="32" fill="url(#sbb)" stroke="#6E9CF8" stroke-width="2"/><rect x="3" y="3" width="28" height="28" fill="none" stroke="#FFFFFF" stroke-width="1.5" opacity="0.8"/><path d="M9 20 L17 12 L25 20" fill="none" stroke="#2A55B8" stroke-width="3"/><rect x="1" y="153" width="32" height="32" fill="url(#sbth)" stroke="#6E9CF8" stroke-width="2"/><rect x="3" y="155" width="28" height="28" fill="none" stroke="#FFFFFF" stroke-width="1.5" opacity="0.8"/><rect x="10" y="160" width="12" height="2" fill="#FFFFFF"/><rect x="12" y="162" width="12" height="2" fill="#3C6EF0"/><rect x="10" y="164" width="12" height="2" fill="#FFFFFF"/><rect x="12" y="166" width="12" height="2" fill="#3C6EF0"/><rect x="10" y="168" width="12" height="2" fill="#FFFFFF"/><rect x="12" y="170" width="12" height="2" fill="#3C6EF0"/><rect x="10" y="172" width="12" height="2" fill="#FFFFFF"/><rect x="12" y="174" width="12" height="2" fill="#3C6EF0"/><rect x="1" y="605" width="32" height="32" fill="url(#sbb)" stroke="#6E9CF8" stroke-width="2"/><rect x="3" y="607" width="28" height="28" fill="none" stroke="#FFFFFF" stroke-width="1.5" opacity="0.8"/><path d="M9 618 L17 626 L25 618" fill="none" stroke="#2A55B8" stroke-width="3"/></svg><div class="a" style="left:0px;top:782px;width:1596px;height:4px;background:#808080;"></div><div class="a" style="left:0px;top:786px;width:1596px;height:96px;background:#FFFBF0;"></div><div class="t" style="left:5px;top:787px;color:#808080">DS:[OOA217D4]=7C811752 (kernel32.GetVersion)</div><div class="a" style="left:0;top:784px;width:591px;height:29px;border:4px solid #ED1C24"></div><div class="a" style="left:1596px;top:140px;width:4px;height:742px;background:#808080;"></div><div class="a" style="left:1600px;top:144px;width:792px;height:738px;background:#FFFBF0;"></div><div class="a" style="left:1600px;top:144px;width:792px;height:2px;background:#FFFFFF;"></div><div class="a" style="left:1600px;top:146px;width:792px;height:28px;background:#C0C0C0;"></div><div class="a" style="left:1600px;top:174px;width:792px;height:2px;background:#000;"></div><div class="t" style="left:1688px;top:150px;color:#000">(FPU)</div><div class="a" style="left:1600px;top:146px;width:2px;height:28px;background:#FFFFFF;"></div><svg class="a" style="left:2050px;top:150px" width="16" height="20"><path d="M12 2 L4 10 L12 18" fill="none" stroke="#000" stroke-width="2" stroke-dasharray="2 0.83"/></svg><svg class="a" style="left:2110px;top:150px" width="16" height="20"><path d="M12 2 L4 10 L12 18" fill="none" stroke="#000" stroke-width="2" stroke-dasharray="2 0.83"/></svg><svg class="a" style="left:2170px;top:150px" width="16" height="20"><path d="M12 2 L4 10 L12 18" fill="none" stroke="#000" stroke-width="2" stroke-dasharray="2 0.83"/></svg><svg class="a" style="left:2230px;top:150px" width="16" height="20"><path d="M12 2 L4 10 L12 18" fill="none" stroke="#000" stroke-width="2" stroke-dasharray="2 0.83"/></svg><svg class="a" style="left:2290px;top:150px" width="16" height="20"><path d="M12 2 L4 10 L12 18" fill="none" stroke="#000" stroke-width="2" stroke-dasharray="2 0.83"/></svg><svg class="a" style="left:2350px;top:150px" width="16" height="20"><path d="M12 2 L4 10 L12 18" fill="none" stroke="#000" stroke-width="2" stroke-dasharray="2 0.83"/></svg><div class="t" style="left:1604px;top:178px;color:#808080">EAX</div><div class="t" style="left:1652px;top:178px;color:#FF0000">OOA217D4</div><div class="t" style="left:1604px;top:202px;color:#808080">ECX OO12FFBO</div><div class="t" style="left:1604px;top:226px;color:#808080">EDX 7C92E514 ntdll.KiFastSystemCallRet</div><div class="t" style="left:1604px;top:250px;color:#808080">EBX 7FFDEOOO</div><div class="t" style="left:1604px;top:274px;color:#808080">ESP OO12FF48</div><div class="t" style="left:1604px;top:298px;color:#808080">EBP OO12FFCO</div><div class="t" style="left:1604px;top:322px;color:#808080">ESI FFFFFFFF</div><div class="t" style="left:1604px;top:346px;color:#808080">EDI 7C93O228 ntdll.7C93O228</div><div class="t" style="left:1604px;top:382px;color:#808080">EIP</div><div class="t" style="left:1652px;top:382px;color:#FF0000">OOA2O7O5</div><div class="t" style="left:1604px;top:418px;color:#808080">C O  ES OO23 32</div><div class="t" style="left:1820px;top:418px;color:#808080">O(FFFFFFFF)</div><div class="t" style="left:1604px;top:442px;color:#808080">P 1  CS OO1B 32</div><div class="t" style="left:1820px;top:442px;color:#808080">O(FFFFFFFF)</div><div class="t" style="left:1604px;top:466px;color:#808080">A O  SS OO23 32</div><div class="t" style="left:1820px;top:466px;color:#808080">O(FFFFFFFF)</div><div class="t" style="left:1604px;top:490px;color:#808080">Z O  DS OO23 32</div><div class="t" style="left:1820px;top:490px;color:#808080">O(FFFFFFFF)</div><div class="t" style="left:1604px;top:514px;color:#808080">S O  FS OO3B 32</div><div class="t" style="left:1820px;top:514px;color:#808080">7FFDDOOO(FFF)</div><div class="t" style="left:1604px;top:538px;color:#808080">T O  GS OOOO NULL</div><div class="t" style="left:1604px;top:562px;color:#808080">D O</div><div class="t" style="left:1604px;top:586px;color:#808080">O O  LastErr ERROR_MOD_NOT_FOUND (OOOOOO7E)</div><div class="t" style="left:1604px;top:622px;color:#808080">EFL OOOOO2O6  (NO,NB,NE,A,NS,PE,GE,G)</div><div class="t" style="left:1604px;top:658px;color:#808080">STO empty -UNORM BBBO O1O5O1O4 OOOOOOOO</div><div class="t" style="left:1604px;top:682px;color:#808080">ST1 empty O.O</div><div class="t" style="left:1604px;top:706px;color:#808080">ST2 empty O.O</div><div class="t" style="left:1604px;top:730px;color:#808080">ST3 empty O.O</div><div class="t" style="left:1604px;top:754px;color:#808080">ST4 empty O.O</div><div class="t" style="left:1604px;top:778px;color:#808080">ST5 empty O.O</div><div class="t" style="left:1604px;top:802px;color:#808080">ST6 empty 1.OOOOOOOOOOOOOOOOOOO</div><div class="t" style="left:1604px;top:826px;color:#808080">ST7 empty 1.OOOOOOOOOOOOOOOOOOO</div><div class="t" style="left:1784px;top:850px;color:#808080">3 2 1 O      E S P U O Z D I</div><div class="t" style="left:1604px;top:874px;color:#808080">FST 4OOO  Cond 1 O O O  Err O O 1 O O O O O  (EQ)</div><div class="a" style="left:2392px;top:140px;width:4px;height:1210px;background:#808080;"></div><div class="a" style="left:0px;top:882px;width:1566px;height:4px;background:#000;"></div><div class="a" style="left:0px;top:886px;width:1562px;height:460px;background:#FFFBF0;"></div><div class="a" style="left:0px;top:886px;width:1528px;height:2px;background:#FFFFFF;"></div><div class="a" style="left:0px;top:888px;width:1528px;height:28px;background:#C0C0C0;"></div><div class="a" style="left:0px;top:916px;width:1528px;height:2px;background:#000;"></div><div class="a" style="left:106px;top:886px;width:2px;height:32px;background:#000;"></div><div class="a" style="left:682px;top:886px;width:2px;height:32px;background:#000;"></div><div class="a" style="left:886px;top:886px;width:2px;height:32px;background:#000;"></div><div class="t" style="left:112px;top:892px;color:#000">HEX</div><div class="t" style="left:689px;top:892px;color:#000">ASCII</div><div class="a" style="left:108px;top:914px;width:574px;height:2px;background:#808080;"></div><div class="a" style="left:680px;top:888px;width:2px;height:28px;background:#808080;"></div><div class="a" style="left:684px;top:888px;width:2px;height:28px;background:#FFFFFF;"></div><div class="a" style="left:686px;top:914px;width:200px;height:2px;background:#808080;"></div><div class="a" style="left:880px;top:888px;width:2px;height:28px;background:#808080;"></div><div class="t" style="left:5px;top:920px;color:#808080">OOA217D4</div><div class="a" style="left:108px;top:918px;width:142px;height:24px;background:#C0C0C0;"></div><div class="a" style="left:690px;top:918px;width:36px;height:23px;background:#C0C0C0;"></div><div class="t" style="left:112px;top:920px;color:#000">52 17 81 7C 66 98 8O 7C 41 C8 85 7C D4 2E 82 7C</div><div class="t" style="left:689px;top:920px;color:#000">R</div><div class="t" style="left:749px;top:920px;color:#000">f</div><div class="t" style="left:785px;top:920px;color:#000">|A</div><div class="t" style="left:833px;top:920px;color:#000">|?</div><div class="t" style="left:5px;top:944px;color:#808080">OOA217E4</div><div class="t" style="left:112px;top:944px;color:#000">8D 28 83 7C 16 9E 82 7C 39 57 87 7C 73 DA 81 7C</div><div class="t" style="left:689px;top:944px;color:#000">?</div><div class="t" style="left:773px;top:944px;color:#000">|9W</div><div class="t" style="left:833px;top:944px;color:#000">s</div><div class="t" style="left:869px;top:944px;color:#000">|</div><div class="t" style="left:5px;top:968px;color:#808080">OOA217F4</div><div class="t" style="left:112px;top:968px;color:#000">E1 2A 87 7C BB B9 81 7C O9 22 87 7C CO 99 8O 7C</div><div class="t" style="left:689px;top:968px;color:#000">?</div><div class="t" style="left:773px;top:968px;color:#000">.&quot;</div><div class="t" style="left:845px;top:968px;color:#000">€|</div><div class="t" style="left:5px;top:992px;color:#808080">OOA218O4</div><div class="t" style="left:112px;top:992px;color:#000">4A 93 8O 7C 31 22 87 7C 46 24 8O 7C 5B CO 81 7C</div><div class="t" style="left:689px;top:992px;color:#000">J</div><div class="t" style="left:725px;top:992px;color:#000">|1&quot;</div><div class="t" style="left:785px;top:992px;color:#000">F$€|[</div><div class="t" style="left:869px;top:992px;color:#000">|</div><div class="t" style="left:5px;top:1016px;color:#808080">OOA21814</div><div class="t" style="left:112px;top:1016px;color:#000">C9 47 87 7C 14 48 87 7C DA 53 87 7C D6 61 83 7C</div><div class="t" style="left:761px;top:1016px;color:#000">H</div><div class="t" style="left:5px;top:1040px;color:#808080">OOA21824</div><div class="t" style="left:112px;top:1040px;color:#000">O9 BD 8O 7C 5D 4C 87 7C A3 4C 87 7C EC 52 87 7C</div><div class="t" style="left:689px;top:1040px;color:#000">.</div><div class="t" style="left:725px;top:1040px;color:#000">|]L</div><div class="t" style="left:5px;top:1064px;color:#808080">OOA21834</div><div class="t" style="left:112px;top:1064px;color:#000">7B 1D 8O 7C 4O AE 8O 7C 7E AC 8O 7C 89 OC 81 7C</div><div class="t" style="left:689px;top:1064px;color:#000">{</div><div class="t" style="left:725px;top:1064px;color:#000">€|@</div><div class="t" style="left:785px;top:1064px;color:#000">|~</div><div class="t" style="left:833px;top:1064px;color:#000">|?</div><div class="t" style="left:5px;top:1088px;color:#808080">OOA21844</div><div class="t" style="left:112px;top:1088px;color:#000">55 D3 81 7C 5D 28 87 7C 91 3F 81 7C 31 F7 81 7C</div><div class="t" style="left:689px;top:1088px;color:#000">U</div><div class="t" style="left:725px;top:1088px;color:#000">|](</div><div class="t" style="left:785px;top:1088px;color:#000">?</div><div class="t" style="left:821px;top:1088px;color:#000">1</div><div class="t" style="left:857px;top:1088px;color:#000">|</div><div class="t" style="left:5px;top:1112px;color:#808080">OOA21854</div><div class="t" style="left:112px;top:1112px;color:#000">21 FE 92 7C 3O FE 92 7C 9C EE 8O 7C FD FD 8O 7C</div><div class="t" style="left:689px;top:1112px;color:#000">!</div><div class="t" style="left:725px;top:1112px;color:#000">|O</div><div class="t" style="left:773px;top:1112px;color:#000">|</div><div class="t" style="left:809px;top:1112px;color:#000">€|  €|</div><div class="t" style="left:5px;top:1136px;color:#808080">OOA21864</div><div class="t" style="left:112px;top:1136px;color:#000">FF FC 8O 7C 3O O8 81 7C E1 O1 81 7C 29 BF 8O 7C</div><div class="t" style="left:725px;top:1136px;color:#000">|O</div><div class="t" style="left:797px;top:1136px;color:#000">?</div><div class="t" style="left:833px;top:1136px;color:#000">)</div><div class="t" style="left:869px;top:1136px;color:#000">|</div><div class="t" style="left:5px;top:1160px;color:#808080">OOA21874</div><div class="t" style="left:112px;top:1160px;color:#000">55 AO 8O 7C 37 CD 8O 7C 91 38 83 7C 2D 9A 8O 7C</div><div class="t" style="left:689px;top:1160px;color:#000">U</div><div class="t" style="left:725px;top:1160px;color:#000">|7</div><div class="t" style="left:773px;top:1160px;color:#000">|?</div><div class="t" style="left:821px;top:1160px;color:#000">-</div><div class="t" style="left:857px;top:1160px;color:#000">|</div><div class="t" style="left:5px;top:1184px;color:#808080">OOA21884</div><div class="t" style="left:112px;top:1184px;color:#000">FD 37 83 7C CF 99 8O 7C 1A 98 8O 7C O6 98 8O 7C</div><div class="t" style="left:689px;top:1184px;color:#000">?</div><div class="t" style="left:749px;top:1184px;color:#000">€|</div><div class="t" style="left:821px;top:1184px;color:#000">|</div><div class="t" style="left:881px;top:1184px;color:#000">|</div><div class="t" style="left:5px;top:1208px;color:#808080">OOA21894</div><div class="t" style="left:112px;top:1208px;color:#000">41 B7 8O 7C 37 CD 8O 7C OO OO OO OO OO OO OO OO</div><div class="t" style="left:689px;top:1208px;color:#000">A</div><div class="t" style="left:725px;top:1208px;color:#000">|7</div><div class="t" style="left:773px;top:1208px;color:#000">|........</div><div class="t" style="left:5px;top:1232px;color:#808080">OOA218A4</div><div class="t" style="left:112px;top:1232px;color:#000">OO OO OO OO OO OO OO OO OO OO OO OO OO OO OO OO</div><div class="t" style="left:689px;top:1232px;color:#000">................</div><div class="t" style="left:5px;top:1256px;color:#808080">OOA218B4</div><div class="t" style="left:112px;top:1256px;color:#000">OO OO OO OO OO OO OO OO OO OO OO OO OO OO OO OO</div><div class="t" style="left:689px;top:1256px;color:#000">................</div><div class="t" style="left:5px;top:1280px;color:#808080">OOA218C4</div><div class="t" style="left:112px;top:1280px;color:#000">OO OO OO OO OO OO OO OO OO OO OO OO OO OO OO OO</div><div class="t" style="left:689px;top:1280px;color:#000">................</div><div class="t" style="left:5px;top:1304px;color:#808080">OOA218D4</div><div class="t" style="left:112px;top:1304px;color:#000">OO OO OO OO OO OO OO OO OO OO OO OO OO OO OO OO</div><div class="t" style="left:689px;top:1304px;color:#000">................</div><div class="t" style="left:5px;top:1328px;color:#808080">OOA218E4</div><div class="t" style="left:112px;top:1328px;color:#000">OO OO OO OO OO OO OO OO OO OO OO OO OO OO OO OO</div><div class="t" style="left:689px;top:1328px;color:#000">................</div><div class="a" style="left:106px;top:918px;width:2px;height:428px;background:#808080;"></div><div class="a" style="left:682px;top:918px;width:2px;height:428px;background:#808080;"></div><div class="a" style="left:886px;top:918px;width:2px;height:428px;background:#808080;"></div><div class="a" style="left:250px;top:918px;width:2px;height:428px;background:#C0C0C0;"></div><div class="a" style="left:394px;top:918px;width:2px;height:428px;background:#C0C0C0;"></div><div class="a" style="left:538px;top:918px;width:2px;height:428px;background:#C0C0C0;"></div><svg class="a" style="left:1528px;top:886px" width="34" height="460" viewBox="0 0 34 460"><rect x="0" y="0" width="34" height="460" fill="url(#sbt)"/><rect x="1" y="1" width="32" height="32" fill="url(#sbb)" stroke="#6E9CF8" stroke-width="2"/><rect x="3" y="3" width="28" height="28" fill="none" stroke="#FFFFFF" stroke-width="1.5" opacity="0.8"/><path d="M9 20 L17 12 L25 20" fill="none" stroke="#2A55B8" stroke-width="3"/><rect x="1" y="301" width="32" height="32" fill="url(#sbth)" stroke="#6E9CF8" stroke-width="2"/><rect x="3" y="303" width="28" height="28" fill="none" stroke="#FFFFFF" stroke-width="1.5" opacity="0.8"/><rect x="10" y="308" width="12" height="2" fill="#FFFFFF"/><rect x="12" y="310" width="12" height="2" fill="#3C6EF0"/><rect x="10" y="312" width="12" height="2" fill="#FFFFFF"/><rect x="12" y="314" width="12" height="2" fill="#3C6EF0"/><rect x="10" y="316" width="12" height="2" fill="#FFFFFF"/><rect x="12" y="318" width="12" height="2" fill="#3C6EF0"/><rect x="10" y="320" width="12" height="2" fill="#FFFFFF"/><rect x="12" y="322" width="12" height="2" fill="#3C6EF0"/><rect x="1" y="427" width="32" height="32" fill="url(#sbb)" stroke="#6E9CF8" stroke-width="2"/><rect x="3" y="429" width="28" height="28" fill="none" stroke="#FFFFFF" stroke-width="1.5" opacity="0.8"/><path d="M9 440 L17 448 L25 440" fill="none" stroke="#2A55B8" stroke-width="3"/></svg><div class="a" style="left:1562px;top:882px;width:4px;height:468px;background:#000;"></div><div class="a" style="left:0px;top:1346px;width:1566px;height:4px;background:#000;"></div><div class="a" style="left:-2px;top:912px;width:257px;height:31px;border:4px solid #ED1C24"></div><div class="a" style="left:1566px;top:882px;width:826px;height:4px;background:#808080;"></div><div class="a" style="left:1566px;top:886px;width:792px;height:460px;background:#FFFBF0;"></div><div class="a" style="left:1566px;top:886px;width:106px;height:24px;background:#000;"></div><div class="a" style="left:1674px;top:886px;width:684px;height:24px;background:#C0C0C0;"></div><div class="t" style="left:1570px;top:888px;color:#FFF">OO12FF48</div><div class="t" style="left:1690px;top:888px;color:#808080">OO4271DC</div><div class="t" style="left:1882px;top:888px;color:#808080">UnPackMe.OO4271DC</div><div class="t" style="left:2158px;top:888px;color:#808080">OOA2O6F7</div><div class="t" style="left:1570px;top:912px;color:#808080">OO12FF4C</div><div class="t" style="left:1690px;top:912px;color:#808080">7C93O228</div><div class="t" style="left:1798px;top:912px;color:#808080">ntdll.7C93O228</div><div class="t" style="left:1570px;top:936px;color:#808080">OO12FF5O</div><div class="t" style="left:1690px;top:936px;color:#808080">FFFFFFFF</div><div class="t" style="left:1570px;top:960px;color:#808080">OO12FF54</div><div class="t" style="left:1690px;top:960px;color:#808080">7FFDEOOO</div><div class="t" style="left:1570px;top:984px;color:#808080">OO12FF58</div><div class="t" style="left:1690px;top:984px;color:#808080">OO12FFEO</div><div class="t" style="left:1570px;top:1008px;color:#808080">OO12FF5C</div><div class="t" style="left:1690px;top:1008px;color:#808080">OO4667DA</div><div class="t" style="left:1882px;top:1008px;color:#808080">UnPackMe.OO4667DA</div><div class="t" style="left:2158px;top:1008px;color:#808080">UnPackMe.OO4667EO</div><div class="t" style="left:1570px;top:1032px;color:#808080">OO12FF6O</div><div class="t" style="left:1690px;top:1032px;color:#808080">OOOOOOOO</div><div class="t" style="left:1570px;top:1056px;color:#808080">OO12FF64</div><div class="t" style="left:1690px;top:1056px;color:#808080">OOOOOOOO</div><div class="t" style="left:1570px;top:1080px;color:#808080">OO12FF68</div><div class="t" style="left:1690px;top:1080px;color:#808080">OO12FBDO</div><div class="t" style="left:1570px;top:1104px;color:#808080">OO12FF6C</div><div class="t" style="left:1690px;top:1104px;color:#808080">OO12FF8O</div><div class="t" style="left:1570px;top:1128px;color:#808080">OO12FF7O</div><div class="t" style="left:1690px;top:1128px;color:#808080">OOOOOOOO</div><div class="t" style="left:1570px;top:1152px;color:#808080">OO12FF74</div><div class="t" style="left:1690px;top:1152px;color:#808080">7C9232BC</div><div class="t" style="left:1798px;top:1152px;color:#808080">ntdll.7C9232BC</div><div class="t" style="left:1570px;top:1176px;color:#808080">OO12FF78</div><div class="t" style="left:1690px;top:1176px;color:#808080">OO4667AB</div><div class="t" style="left:1882px;top:1176px;color:#808080">UnPackMe.OO4667AB</div><div class="t" style="left:2158px;top:1176px;color:#808080">UnPackMe.OO4667B1</div><div class="t" style="left:1570px;top:1200px;color:#808080">OO12FF7C</div><div class="t" style="left:1690px;top:1200px;color:#808080">OO466872</div><div class="t" style="left:1882px;top:1200px;color:#808080">UnPackMe.OO466872</div><div class="t" style="left:2158px;top:1200px;color:#808080">UnPackMe.OO46687D</div><div class="t" style="left:1570px;top:1224px;color:#808080">OO12FF8O</div><div class="t" style="left:1690px;top:1224px;color:#808080">OOOOOOOO</div><div class="t" style="left:1570px;top:1248px;color:#808080">OO12FF84</div><div class="t" style="left:1690px;top:1248px;color:#808080">OOOOOOOO</div><div class="t" style="left:1570px;top:1272px;color:#808080">OO12FF88</div><div class="t" style="left:1690px;top:1272px;color:#808080">OOO5995E</div><div class="t" style="left:1570px;top:1296px;color:#808080">OO12FF8C</div><div class="t" style="left:1690px;top:1296px;color:#808080">OO12FFAO</div><div class="t" style="left:1570px;top:1320px;color:#808080">OO12FF9O</div><div class="t" style="left:1690px;top:1320px;color:#808080">OOOOOOOO</div><div class="a" style="left:1672px;top:886px;width:2px;height:460px;background:#808080;"></div><div class="a" style="left:1792px;top:886px;width:2px;height:460px;background:#808080;"></div><svg class="a" style="left:2358px;top:886px" width="34" height="460" viewBox="0 0 34 460"><rect x="0" y="0" width="34" height="460" fill="url(#sbt)"/><rect x="1" y="1" width="32" height="32" fill="url(#sbb)" stroke="#6E9CF8" stroke-width="2"/><rect x="3" y="3" width="28" height="28" fill="none" stroke="#FFFFFF" stroke-width="1.5" opacity="0.8"/><path d="M9 20 L17 12 L25 20" fill="none" stroke="#2A55B8" stroke-width="3"/><rect x="1" y="387" width="32" height="32" fill="url(#sbth)" stroke="#6E9CF8" stroke-width="2"/><rect x="3" y="389" width="28" height="28" fill="none" stroke="#FFFFFF" stroke-width="1.5" opacity="0.8"/><rect x="10" y="394" width="12" height="2" fill="#FFFFFF"/><rect x="12" y="396" width="12" height="2" fill="#3C6EF0"/><rect x="10" y="398" width="12" height="2" fill="#FFFFFF"/><rect x="12" y="400" width="12" height="2" fill="#3C6EF0"/><rect x="10" y="402" width="12" height="2" fill="#FFFFFF"/><rect x="12" y="404" width="12" height="2" fill="#3C6EF0"/><rect x="10" y="406" width="12" height="2" fill="#FFFFFF"/><rect x="12" y="408" width="12" height="2" fill="#3C6EF0"/><rect x="1" y="427" width="32" height="32" fill="url(#sbb)" stroke="#6E9CF8" stroke-width="2"/><rect x="3" y="429" width="28" height="28" fill="none" stroke="#FFFFFF" stroke-width="1.5" opacity="0.8"/><path d="M9 440 L17 448 L25 440" fill="none" stroke="#2A55B8" stroke-width="3"/></svg><div class="a" style="left:1566px;top:1346px;width:826px;height:4px;background:#808080;"></div><div class="a" style="left:0px;top:1350px;width:2396px;height:50px;background:#ECE9D8;"></div><div class="a" style="left:74px;top:1368px;width:4px;height:4px;background:#000"></div><div class="a" style="left:74px;top:1378px;width:4px;height:4px;background:#000"></div><div class="a" style="left:120px;top:1356px;width:391px;height:34px;background:#fff;border-top:2px solid #8A8672;border-left:2px solid #8A8672;border-bottom:2px solid #FFFFFF;border-right:2px solid #FFFFFF"></div><div class="a" style="left:481px;top:1358px;width:30px;height:32px;background:#F2F0E4;border-right:2px solid #8A8672;border-bottom:2px solid #8A8672"></div><svg class="a" style="left:484px;top:1366px" width="24" height="14"><path d="M5 3 L19 3 L12 10 Z" fill="#000"/></svg><div class="a" style="left:524px;top:1356px;width:1864px;height:34px;border-top:2px solid #A8A490;border-left:2px solid #A8A490;border-bottom:2px solid #FFFFFF;border-right:2px solid #FFFFFF"></div><div class="a" style="left:0px;top:1400px;width:2396px;height:2px;background:#FFFFFF;"></div><div class="a" style="left:0px;top:1402px;width:2396px;height:2px;background:#C8C8C8;"></div><div class="a" style="left:0px;top:1404px;width:2396px;height:2px;background:#808080;"></div><div class="a" style="left:0px;top:1406px;width:2396px;height:34px;background:#C0C0C0;"></div><div class="a" style="left:0px;top:1436px;width:2396px;height:2px;background:#FFFFFF;"></div><div class="a" style="left:0px;top:1404px;width:2121px;height:30px;border-top:2px solid #808080;border-left:2px solid #808080;border-bottom:2px solid #FFFFFF;border-right:2px solid #FFFFFF"></div><div class="a" style="left:2128px;top:1404px;width:78px;height:30px;border-top:2px solid #808080;border-left:2px solid #808080;border-bottom:2px solid #FFFFFF;border-right:2px solid #FFFFFF"></div><div class="a" style="left:2212px;top:1404px;width:178px;height:30px;border-top:2px solid #808080;border-left:2px solid #808080;border-bottom:2px solid #FFFFFF;border-right:2px solid #FFFFFF"></div><div class="a" style="left:2214px;top:1406px;width:178px;height:30px;background:#FFFF33;"></div><svg class="a" style="left:0;top:0;pointer-events:none" width="2398" height="1440"><defs><path id="g4e85T" d="M10 2h2v2h-2zM10 4h2v2h-2zM10 6h2v2h-2zM10 8h2v2h-2zM10 10h2v2h-2zM10 12h2v2h-2zM10 14h2v2h-2zM10 16h2v2h-2zM10 18h2v2h-2zM10 20h2v2h-2zM6 22h6v2h-6z"/><path id="g4ee4" d="M12 0h2v2h-2zM10 2h4v2h-4zM8 4h2v2h-2zM14 4h2v2h-2zM4 6h4v2h-4zM10 6h2v2h-2zM16 6h4v2h-4zM2 8h4v2h-4zM12 8h2v2h-2zM20 8h4v2h-4zM12 10h2v2h-2zM4 12h16v2h-16zM16 14h2v2h-2zM8 16h2v2h-2zM14 16h2v2h-2zM8 18h6v2h-6zM12 20h2v2h-2zM14 22h2v2h-2z"/><path id="g4ef6" d="M6 2h2v2h-2zM14 2h2v2h-2zM6 4h2v2h-2zM10 4h2v2h-2zM14 4h2v2h-2zM4 6h2v2h-2zM10 6h2v2h-2zM14 6h2v2h-2zM4 8h2v2h-2zM10 8h12v2h-12zM2 10h4v2h-4zM8 10h2v2h-2zM14 10h2v2h-2zM4 12h2v2h-2zM14 12h2v2h-2zM4 14h2v2h-2zM8 14h14v2h-14zM4 16h2v2h-2zM14 16h2v2h-2zM4 18h2v2h-2zM14 18h2v2h-2zM4 20h2v2h-2zM14 20h2v2h-2zM4 22h2v2h-2zM14 22h2v2h-2zM4 24h2v2h-2zM14 24h2v2h-2z"/><path id="g4f4d" d="M6 0h2v2h-2zM14 0h2v2h-2zM6 2h2v2h-2zM14 2h2v2h-2zM4 4h2v2h-2zM8 4h14v2h-14zM4 6h2v2h-2zM2 8h4v2h-4zM10 8h2v2h-2zM18 8h2v2h-2zM4 10h2v2h-2zM10 10h2v2h-2zM18 10h2v2h-2zM4 12h2v2h-2zM12 12h2v2h-2zM18 12h2v2h-2zM4 14h2v2h-2zM12 14h2v2h-2zM18 14h2v2h-2zM4 16h2v2h-2zM12 16h2v2h-2zM16 16h2v2h-2zM4 18h2v2h-2zM16 18h2v2h-2zM4 20h2v2h-2zM8 20h14v2h-14zM4 22h2v2h-2z"/><path id="g5008T" d="M6 2h2v2h-2zM14 2h2v2h-2zM4 4h2v2h-2zM14 4h2v2h-2zM4 6h18v2h-18zM2 8h2v2h-2zM10 8h2v2h-2zM14 8h2v2h-2zM18 8h2v2h-2zM2 10h2v2h-2zM8 10h2v2h-2zM14 10h2v2h-2zM18 10h2v2h-2zM0 12h4v2h-4zM8 12h4v2h-4zM14 12h6v2h-6zM2 14h2v2h-2zM6 14h2v2h-2zM14 14h4v2h-4zM20 14h2v2h-2zM2 16h2v2h-2zM12 16h4v2h-4zM2 18h2v2h-2zM10 18h2v2h-2zM14 18h4v2h-4zM2 20h2v2h-2zM8 20h2v2h-2zM14 20h2v2h-2zM18 20h2v2h-2zM2 22h2v2h-2zM6 22h2v2h-2zM14 22h2v2h-2zM20 22h2v2h-2zM14 24h2v2h-2z"/><path id="g505c" d="M6 0h2v2h-2zM14 0h2v2h-2zM6 2h16v2h-16zM4 4h2v2h-2zM4 6h2v2h-2zM10 6h10v2h-10zM2 8h4v2h-4zM10 8h10v2h-10zM0 10h6v2h-6zM4 12h2v2h-2zM8 12h14v2h-14zM4 14h4v2h-4zM20 14h2v2h-2zM4 16h2v2h-2zM10 16h10v2h-10zM4 18h2v2h-2zM14 18h2v2h-2zM4 20h2v2h-2zM14 20h2v2h-2zM4 22h2v2h-2zM10 22h6v2h-6z"/><path id="g5104T" d="M6 2h2v2h-2zM4 4h2v2h-2zM14 4h2v2h-2zM4 6h2v2h-2zM10 6h4v2h-4zM16 6h4v2h-4zM4 8h18v2h-18zM2 10h4v2h-4zM0 12h2v2h-2zM4 12h2v2h-2zM8 12h12v2h-12zM4 14h2v2h-2zM8 14h2v2h-2zM18 14h2v2h-2zM4 16h2v2h-2zM8 16h12v2h-12zM4 18h2v2h-2zM10 18h8v2h-8zM4 20h2v2h-2zM8 20h4v2h-4zM14 20h2v2h-2zM4 22h2v2h-2zM8 22h4v2h-4zM20 22h2v2h-2zM4 24h2v2h-2zM10 24h10v2h-10z"/><path id="g5230" d="M20 2h2v2h-2zM2 4h12v2h-12zM16 4h2v2h-2zM20 4h2v2h-2zM4 6h2v2h-2zM16 6h2v2h-2zM20 6h2v2h-2zM4 8h2v2h-2zM10 8h2v2h-2zM16 8h2v2h-2zM20 8h2v2h-2zM2 10h12v2h-12zM16 10h2v2h-2zM20 10h2v2h-2zM16 12h2v2h-2zM20 12h2v2h-2zM6 14h2v2h-2zM16 14h2v2h-2zM20 14h2v2h-2zM2 16h12v2h-12zM16 16h2v2h-2zM20 16h2v2h-2zM6 18h2v2h-2zM16 18h2v2h-2zM20 18h2v2h-2zM6 20h2v2h-2zM12 20h2v2h-2zM20 20h2v2h-2zM2 22h10v2h-10zM20 22h2v2h-2zM16 24h6v2h-6z"/><path id="g52a9" d="M2 4h8v2h-8zM14 4h2v2h-2zM2 6h2v2h-2zM8 6h2v2h-2zM14 6h2v2h-2zM2 8h8v2h-8zM12 8h10v2h-10zM2 10h2v2h-2zM8 10h2v2h-2zM14 10h2v2h-2zM20 10h2v2h-2zM2 12h2v2h-2zM8 12h2v2h-2zM14 12h2v2h-2zM20 12h2v2h-2zM2 14h8v2h-8zM14 14h2v2h-2zM20 14h2v2h-2zM2 16h2v2h-2zM8 16h2v2h-2zM14 16h2v2h-2zM20 16h2v2h-2zM2 18h2v2h-2zM8 18h4v2h-4zM14 18h2v2h-2zM20 18h2v2h-2zM2 20h8v2h-8zM12 20h2v2h-2zM20 20h2v2h-2zM10 22h4v2h-4zM20 22h2v2h-2zM10 24h2v2h-2zM16 24h4v2h-4z"/><path id="g53cd" d="M16 2h4v2h-4zM4 4h12v2h-12zM4 6h2v2h-2zM4 8h2v2h-2zM4 10h16v2h-16zM4 12h2v2h-2zM8 12h2v2h-2zM18 12h2v2h-2zM4 14h2v2h-2zM8 14h2v2h-2zM16 14h2v2h-2zM4 16h2v2h-2zM10 16h2v2h-2zM16 16h2v2h-2zM4 18h2v2h-2zM12 18h4v2h-4zM2 20h2v2h-2zM12 20h4v2h-4zM2 22h2v2h-2zM8 22h4v2h-4zM16 22h4v2h-4zM2 24h2v2h-2zM6 24h2v2h-2zM20 24h2v2h-2z"/><path id="g53e3" d="M4 4h18v2h-18zM4 6h2v2h-2zM20 6h2v2h-2zM4 8h2v2h-2zM20 8h2v2h-2zM4 10h2v2h-2zM20 10h2v2h-2zM4 12h2v2h-2zM20 12h2v2h-2zM4 14h2v2h-2zM20 14h2v2h-2zM4 16h2v2h-2zM20 16h2v2h-2zM4 18h2v2h-2zM20 18h2v2h-2zM4 20h2v2h-2zM20 20h2v2h-2zM4 22h18v2h-18zM20 24h2v2h-2z"/><path id="g53e3T" d="M4 4h16v2h-16zM4 6h2v2h-2zM18 6h2v2h-2zM4 8h2v2h-2zM18 8h2v2h-2zM4 10h2v2h-2zM18 10h2v2h-2zM4 12h2v2h-2zM18 12h2v2h-2zM4 14h2v2h-2zM18 14h2v2h-2zM4 16h2v2h-2zM18 16h2v2h-2zM4 18h2v2h-2zM18 18h2v2h-2zM4 20h2v2h-2zM18 20h2v2h-2zM4 22h16v2h-16z"/><path id="g547d" d="M12 0h2v2h-2zM8 2h6v2h-6zM6 4h4v2h-4zM14 4h4v2h-4zM2 6h4v2h-4zM8 6h8v2h-8zM18 6h4v2h-4zM4 10h6v2h-6zM12 10h10v2h-10zM2 12h2v2h-2zM8 12h2v2h-2zM12 12h2v2h-2zM20 12h2v2h-2zM2 14h2v2h-2zM8 14h2v2h-2zM12 14h2v2h-2zM20 14h2v2h-2zM2 16h2v2h-2zM8 16h2v2h-2zM12 16h2v2h-2zM20 16h2v2h-2zM4 18h6v2h-6zM12 18h2v2h-2zM16 18h4v2h-4zM12 20h2v2h-2zM12 22h2v2h-2z"/><path id="g5668" d="M4 4h6v2h-6zM14 4h6v2h-6zM2 6h2v2h-2zM8 6h2v2h-2zM12 6h2v2h-2zM18 6h2v2h-2zM4 8h6v2h-6zM14 8h6v2h-6zM10 10h2v2h-2zM14 10h4v2h-4zM2 12h20v2h-20zM6 14h2v2h-2zM14 14h4v2h-4zM4 16h2v2h-2zM16 16h4v2h-4zM2 18h8v2h-8zM14 18h8v2h-8zM2 20h2v2h-2zM8 20h2v2h-2zM12 20h2v2h-2zM18 20h2v2h-2zM2 22h2v2h-2zM8 22h2v2h-2zM12 22h2v2h-2zM18 22h2v2h-2zM4 24h6v2h-6zM14 24h6v2h-6z"/><path id="g56de" d="M2 4h20v2h-20zM2 6h2v2h-2zM20 6h2v2h-2zM2 8h2v2h-2zM8 8h8v2h-8zM20 8h2v2h-2zM2 10h2v2h-2zM6 10h2v2h-2zM14 10h2v2h-2zM20 10h2v2h-2zM2 12h2v2h-2zM6 12h2v2h-2zM14 12h2v2h-2zM20 12h2v2h-2zM2 14h2v2h-2zM6 14h2v2h-2zM14 14h2v2h-2zM20 14h2v2h-2zM2 16h2v2h-2zM8 16h8v2h-8zM20 16h2v2h-2zM2 18h2v2h-2zM20 18h2v2h-2zM2 20h2v2h-2zM20 20h2v2h-2zM2 22h20v2h-20zM2 24h2v2h-2zM20 24h2v2h-2z"/><path id="g5730" d="M4 2h2v2h-2zM4 4h2v2h-2zM10 4h2v2h-2zM14 4h2v2h-2zM4 6h2v2h-2zM10 6h2v2h-2zM14 6h2v2h-2zM20 6h2v2h-2zM0 8h8v2h-8zM10 8h2v2h-2zM16 8h6v2h-6zM4 10h2v2h-2zM10 10h6v2h-6zM20 10h2v2h-2zM4 12h2v2h-2zM8 12h4v2h-4zM14 12h2v2h-2zM20 12h2v2h-2zM4 14h2v2h-2zM10 14h2v2h-2zM14 14h2v2h-2zM20 14h2v2h-2zM4 16h2v2h-2zM10 16h2v2h-2zM14 16h2v2h-2zM20 16h2v2h-2zM4 18h4v2h-4zM10 18h2v2h-2zM14 18h2v2h-2zM18 18h4v2h-4zM2 20h2v2h-2zM10 20h2v2h-2zM10 22h2v2h-2zM20 22h2v2h-2zM12 24h10v2h-10z"/><path id="g5740" d="M4 2h2v2h-2zM16 2h2v2h-2zM4 4h2v2h-2zM16 4h2v2h-2zM4 6h2v2h-2zM16 6h2v2h-2zM2 8h10v2h-10zM16 8h2v2h-2zM4 10h2v2h-2zM10 10h2v2h-2zM16 10h2v2h-2zM4 12h2v2h-2zM10 12h2v2h-2zM16 12h6v2h-6zM4 14h2v2h-2zM10 14h2v2h-2zM16 14h2v2h-2zM4 16h2v2h-2zM10 16h2v2h-2zM16 16h2v2h-2zM4 18h4v2h-4zM10 18h2v2h-2zM16 18h2v2h-2zM0 20h4v2h-4zM10 20h2v2h-2zM16 20h2v2h-2zM10 22h2v2h-2zM16 22h2v2h-2zM8 24h16v2h-16z"/><path id="g5b58" d="M10 2h2v2h-2zM8 4h2v2h-2zM2 6h20v2h-20zM6 8h2v2h-2zM6 10h2v2h-2zM10 10h12v2h-12zM4 12h2v2h-2zM18 12h2v2h-2zM2 14h4v2h-4zM14 14h4v2h-4zM4 16h2v2h-2zM8 16h14v2h-14zM4 18h2v2h-2zM14 18h2v2h-2zM4 20h2v2h-2zM14 20h2v2h-2zM4 22h2v2h-2zM14 22h2v2h-2zM4 24h2v2h-2zM12 24h4v2h-4z"/><path id="g5bc4" d="M10 0h2v2h-2zM2 2h20v2h-20zM2 4h2v2h-2zM20 4h2v2h-2zM4 6h16v2h-16zM10 8h6v2h-6zM4 10h6v2h-6zM16 10h4v2h-4zM2 12h20v2h-20zM18 14h2v2h-2zM4 16h10v2h-10zM18 16h2v2h-2zM4 18h10v2h-10zM18 18h2v2h-2zM4 20h2v2h-2zM18 20h2v2h-2zM14 22h6v2h-6z"/><path id="g5e2e" d="M6 2h2v2h-2zM14 2h8v2h-8zM2 4h10v2h-10zM14 4h2v2h-2zM20 4h2v2h-2zM6 6h2v2h-2zM14 6h2v2h-2zM18 6h2v2h-2zM2 8h10v2h-10zM14 8h2v2h-2zM18 8h2v2h-2zM2 10h10v2h-10zM14 10h2v2h-2zM20 10h2v2h-2zM6 12h2v2h-2zM14 12h2v2h-2zM20 12h2v2h-2zM4 14h2v2h-2zM14 14h2v2h-2zM18 14h2v2h-2zM2 16h2v2h-2zM10 16h2v2h-2zM4 18h16v2h-16zM4 20h2v2h-2zM10 20h2v2h-2zM18 20h2v2h-2zM4 22h2v2h-2zM10 22h2v2h-2zM16 22h4v2h-4zM10 24h2v2h-2z"/><path id="g636e" d="M4 2h2v2h-2zM4 4h2v2h-2zM10 4h12v2h-12zM4 6h2v2h-2zM10 6h2v2h-2zM20 6h2v2h-2zM0 8h8v2h-8zM10 8h12v2h-12zM4 10h2v2h-2zM10 10h2v2h-2zM16 10h2v2h-2zM4 12h2v2h-2zM10 12h12v2h-12zM2 14h6v2h-6zM10 14h2v2h-2zM16 14h2v2h-2zM0 16h6v2h-6zM8 16h2v2h-2zM16 16h2v2h-2zM4 18h2v2h-2zM8 18h2v2h-2zM12 18h10v2h-10zM4 20h2v2h-2zM8 20h2v2h-2zM12 20h2v2h-2zM20 20h2v2h-2zM4 22h2v2h-2zM8 22h2v2h-2zM12 22h2v2h-2zM20 22h2v2h-2zM2 24h6v2h-6zM12 24h10v2h-10z"/><path id="g63d2" d="M4 2h2v2h-2zM18 2h4v2h-4zM4 4h2v2h-2zM10 4h8v2h-8zM4 6h2v2h-2zM14 6h2v2h-2zM2 8h20v2h-20zM4 10h2v2h-2zM14 10h2v2h-2zM4 12h2v2h-2zM10 12h6v2h-6zM18 12h4v2h-4zM4 14h4v2h-4zM10 14h2v2h-2zM14 14h2v2h-2zM20 14h2v2h-2zM2 16h4v2h-4zM10 16h2v2h-2zM14 16h2v2h-2zM20 16h2v2h-2zM4 18h2v2h-2zM10 18h6v2h-6zM18 18h4v2h-4zM4 20h2v2h-2zM10 20h2v2h-2zM14 20h2v2h-2zM20 20h2v2h-2zM4 22h2v2h-2zM10 22h12v2h-12zM2 24h4v2h-4zM10 24h2v2h-2zM20 24h2v2h-2z"/><path id="g6425T" d="M4 2h2v2h-2zM16 2h2v2h-2zM4 4h2v2h-2zM8 4h2v2h-2zM14 4h8v2h-8zM4 6h2v2h-2zM10 6h4v2h-4zM20 6h2v2h-2zM2 8h6v2h-6zM12 8h2v2h-2zM20 8h2v2h-2zM4 10h2v2h-2zM8 10h4v2h-4zM14 10h8v2h-8zM4 12h2v2h-2zM10 12h4v2h-4zM4 14h4v2h-4zM10 14h2v2h-2zM14 14h8v2h-8zM2 16h4v2h-4zM10 16h4v2h-4zM20 16h2v2h-2zM4 18h2v2h-2zM10 18h4v2h-4zM20 18h2v2h-2zM4 20h2v2h-2zM10 20h2v2h-2zM14 20h8v2h-8zM4 22h2v2h-2zM8 22h4v2h-4zM2 24h4v2h-4zM12 24h10v2h-10z"/><path id="g6570" d="M2 0h2v2h-2zM6 0h2v2h-2zM10 0h2v2h-2zM14 0h2v2h-2zM2 2h2v2h-2zM6 2h4v2h-4zM14 2h2v2h-2zM2 4h10v2h-10zM14 4h8v2h-8zM4 6h6v2h-6zM14 6h2v2h-2zM18 6h2v2h-2zM4 8h4v2h-4zM10 8h2v2h-2zM14 8h2v2h-2zM18 8h2v2h-2zM2 10h2v2h-2zM6 10h2v2h-2zM12 10h4v2h-4zM18 10h2v2h-2zM6 12h2v2h-2zM12 12h4v2h-4zM18 12h2v2h-2zM2 14h10v2h-10zM16 14h4v2h-4zM4 16h2v2h-2zM8 16h2v2h-2zM16 16h2v2h-2zM4 18h6v2h-6zM16 18h4v2h-4zM4 20h6v2h-6zM14 20h2v2h-2zM20 20h2v2h-2zM2 22h2v2h-2zM12 22h2v2h-2zM20 22h2v2h-2z"/><path id="g6587" d="M10 0h2v2h-2zM12 2h2v2h-2zM2 4h20v2h-20zM6 6h2v2h-2zM16 6h2v2h-2zM6 8h2v2h-2zM16 8h2v2h-2zM8 10h2v2h-2zM14 10h4v2h-4zM8 12h2v2h-2zM14 12h2v2h-2zM10 14h4v2h-4zM10 16h4v2h-4zM8 18h2v2h-2zM14 18h2v2h-2zM4 20h4v2h-4zM16 20h4v2h-4zM2 22h2v2h-2zM20 22h2v2h-2z"/><path id="g6682" d="M6 2h2v2h-2zM20 2h2v2h-2zM2 4h10v2h-10zM14 4h6v2h-6zM2 6h2v2h-2zM6 6h2v2h-2zM14 6h2v2h-2zM2 8h10v2h-10zM14 8h8v2h-8zM6 10h2v2h-2zM12 10h2v2h-2zM18 10h2v2h-2zM2 12h12v2h-12zM18 12h2v2h-2zM6 14h2v2h-2zM12 14h2v2h-2zM18 14h2v2h-2zM4 16h16v2h-16zM4 18h2v2h-2zM18 18h2v2h-2zM4 20h16v2h-16zM4 22h2v2h-2zM18 22h2v2h-2zM4 24h16v2h-16z"/><path id="g6765" d="M10 2h2v2h-2zM10 4h2v2h-2zM2 6h20v2h-20zM4 8h2v2h-2zM10 8h2v2h-2zM18 8h2v2h-2zM6 10h2v2h-2zM10 10h2v2h-2zM16 10h2v2h-2zM6 12h2v2h-2zM10 12h2v2h-2zM16 12h2v2h-2zM2 14h20v2h-20zM8 16h4v2h-4zM14 16h2v2h-2zM6 18h6v2h-6zM14 18h2v2h-2zM4 20h4v2h-4zM10 20h2v2h-2zM16 20h4v2h-4zM2 22h4v2h-4zM10 22h2v2h-2zM18 22h4v2h-4z"/><path id="g67e5" d="M10 4h2v2h-2zM2 6h20v2h-20zM8 8h4v2h-4zM14 8h2v2h-2zM6 10h2v2h-2zM10 10h2v2h-2zM16 10h2v2h-2zM2 12h4v2h-4zM18 12h4v2h-4zM6 14h12v2h-12zM6 16h12v2h-12zM6 18h2v2h-2zM16 18h2v2h-2zM6 20h12v2h-12zM2 24h20v2h-20z"/><path id="g69beT" d="M10 2h10v2h-10zM4 4h2v2h-2zM10 4h2v2h-2zM18 4h2v2h-2zM2 6h6v2h-6zM10 6h6v2h-6zM18 6h2v2h-2zM4 8h2v2h-2zM10 8h2v2h-2zM14 8h2v2h-2zM18 8h2v2h-2zM4 10h2v2h-2zM8 10h14v2h-14zM2 12h2v2h-2zM6 12h4v2h-4zM20 12h2v2h-2zM2 14h4v2h-4zM10 14h10v2h-10zM2 16h4v2h-4zM10 16h2v2h-2zM18 16h2v2h-2zM4 18h2v2h-2zM10 18h10v2h-10zM4 20h2v2h-2zM10 20h10v2h-10zM4 22h2v2h-2zM10 22h2v2h-2zM18 22h2v2h-2zM10 24h2v2h-2zM18 24h2v2h-2z"/><path id="g6b8cT" d="M2 2h8v2h-8zM4 4h2v2h-2zM10 4h12v2h-12zM2 6h2v2h-2zM12 6h2v2h-2zM16 6h2v2h-2zM20 6h2v2h-2zM4 8h4v2h-4zM10 8h2v2h-2zM14 8h2v2h-2zM18 8h2v2h-2zM2 10h2v2h-2zM6 10h2v2h-2zM10 10h2v2h-2zM14 10h2v2h-2zM18 10h2v2h-2zM2 12h2v2h-2zM6 12h2v2h-2zM12 12h2v2h-2zM16 12h4v2h-4zM0 14h2v2h-2zM4 14h4v2h-4zM12 14h2v2h-2zM16 14h2v2h-2zM20 14h2v2h-2zM6 16h2v2h-2zM10 16h12v2h-12zM4 18h2v2h-2zM14 18h2v2h-2zM4 20h2v2h-2zM14 20h2v2h-2zM2 22h2v2h-2zM14 22h2v2h-2zM10 24h12v2h-12z"/><path id="g6c47" d="M4 4h2v2h-2zM8 4h14v2h-14zM8 6h2v2h-2zM8 8h2v2h-2zM2 10h2v2h-2zM8 10h2v2h-2zM4 12h2v2h-2zM8 12h2v2h-2zM8 14h2v2h-2zM4 16h2v2h-2zM8 16h2v2h-2zM4 18h2v2h-2zM8 18h2v2h-2zM4 20h2v2h-2zM8 20h2v2h-2zM2 22h2v2h-2zM8 22h14v2h-14zM2 24h2v2h-2z"/><path id="g6ce8" d="M2 0h2v2h-2zM14 0h2v2h-2zM4 2h4v2h-4zM14 2h2v2h-2zM8 4h14v2h-14zM14 6h2v2h-2zM2 8h4v2h-4zM14 8h2v2h-2zM14 10h2v2h-2zM8 12h14v2h-14zM6 14h2v2h-2zM14 14h2v2h-2zM4 16h2v2h-2zM14 16h2v2h-2zM4 18h2v2h-2zM14 18h2v2h-2zM2 20h2v2h-2zM14 20h2v2h-2zM2 22h2v2h-2zM8 22h16v2h-16z"/><path id="g6eceT" d="M6 2h2v2h-2zM16 2h2v2h-2zM2 4h2v2h-2zM6 4h4v2h-4zM12 4h2v2h-2zM16 4h2v2h-2zM20 4h2v2h-2zM2 6h2v2h-2zM6 6h4v2h-4zM12 6h2v2h-2zM16 6h2v2h-2zM4 8h2v2h-2zM8 8h2v2h-2zM14 8h2v2h-2zM18 8h2v2h-2zM2 10h2v2h-2zM12 10h2v2h-2zM20 10h2v2h-2zM2 12h20v2h-20zM2 14h2v2h-2zM10 14h2v2h-2zM20 14h2v2h-2zM4 16h6v2h-6zM12 16h2v2h-2zM16 16h4v2h-4zM6 18h2v2h-2zM10 18h2v2h-2zM14 18h2v2h-2zM6 20h2v2h-2zM10 20h2v2h-2zM14 20h2v2h-2zM4 22h2v2h-2zM10 22h2v2h-2zM16 22h2v2h-2zM2 24h2v2h-2zM8 24h4v2h-4zM18 24h4v2h-4z"/><path id="g702dT" d="M8 2h2v2h-2zM16 2h2v2h-2zM2 4h2v2h-2zM6 4h6v2h-6zM14 4h2v2h-2zM18 4h2v2h-2zM4 6h2v2h-2zM8 6h2v2h-2zM14 6h2v2h-2zM20 6h2v2h-2zM8 8h2v2h-2zM12 8h8v2h-8zM2 10h10v2h-10zM4 12h2v2h-2zM8 12h12v2h-12zM4 14h10v2h-10zM16 14h6v2h-6zM6 16h16v2h-16zM2 18h2v2h-2zM8 18h2v2h-2zM12 18h10v2h-10zM2 20h12v2h-12zM16 20h6v2h-6zM2 22h2v2h-2zM8 22h2v2h-2zM12 22h2v2h-2zM16 22h2v2h-2zM20 22h2v2h-2zM8 24h2v2h-2zM12 24h2v2h-2zM16 24h2v2h-2zM20 24h2v2h-2z"/><path id="g721bT" d="M4 2h2v2h-2zM4 4h2v2h-2zM8 4h6v2h-6zM16 4h6v2h-6zM4 6h2v2h-2zM8 6h6v2h-6zM16 6h6v2h-6zM4 8h6v2h-6zM12 8h2v2h-2zM16 8h2v2h-2zM20 8h2v2h-2zM2 10h10v2h-10zM18 10h4v2h-4zM4 12h2v2h-2zM8 12h2v2h-2zM20 12h2v2h-2zM4 14h2v2h-2zM8 14h2v2h-2zM14 14h4v2h-4zM20 14h2v2h-2zM4 16h2v2h-2zM8 16h14v2h-14zM4 18h2v2h-2zM8 18h4v2h-4zM14 18h2v2h-2zM18 18h4v2h-4zM2 20h2v2h-2zM6 20h4v2h-4zM12 20h6v2h-6zM20 20h2v2h-2zM2 22h2v2h-2zM8 22h2v2h-2zM12 22h2v2h-2zM18 22h4v2h-4zM2 24h2v2h-2zM8 24h2v2h-2zM20 24h2v2h-2z"/><path id="g744eT" d="M16 2h2v2h-2zM2 4h8v2h-8zM16 4h2v2h-2zM20 4h2v2h-2zM4 6h2v2h-2zM10 6h10v2h-10zM4 8h2v2h-2zM8 8h2v2h-2zM16 8h2v2h-2zM4 10h2v2h-2zM8 10h2v2h-2zM14 10h4v2h-4zM20 10h2v2h-2zM2 12h6v2h-6zM10 12h4v2h-4zM18 12h4v2h-4zM4 14h2v2h-2zM10 14h12v2h-12zM4 16h2v2h-2zM10 16h2v2h-2zM20 16h2v2h-2zM4 18h2v2h-2zM10 18h2v2h-2zM20 18h2v2h-2zM4 20h4v2h-4zM10 20h12v2h-12zM2 22h2v2h-2zM10 22h2v2h-2zM20 22h2v2h-2zM10 24h12v2h-12z"/><path id="g755dT" d="M6 4h2v2h-2zM14 4h2v2h-2zM2 6h10v2h-10zM14 6h6v2h-6zM14 8h2v2h-2zM18 8h2v2h-2zM2 10h12v2h-12zM18 10h2v2h-2zM2 12h2v2h-2zM6 12h2v2h-2zM10 12h4v2h-4zM18 12h2v2h-2zM2 14h2v2h-2zM6 14h2v2h-2zM10 14h2v2h-2zM18 14h2v2h-2zM2 16h10v2h-10zM18 16h2v2h-2zM2 18h2v2h-2zM6 18h2v2h-2zM10 18h2v2h-2zM16 18h4v2h-4zM2 20h2v2h-2zM6 20h2v2h-2zM10 20h2v2h-2zM14 20h2v2h-2zM18 20h2v2h-2zM2 22h12v2h-12zM20 22h2v2h-2z"/><path id="g770b" d="M18 2h2v2h-2zM4 4h14v2h-14zM4 6h18v2h-18zM8 8h2v2h-2zM2 10h20v2h-20zM6 12h2v2h-2zM4 14h16v2h-16zM2 16h18v2h-18zM2 18h2v2h-2zM6 18h2v2h-2zM18 18h2v2h-2zM6 20h14v2h-14zM6 22h2v2h-2zM18 22h2v2h-2zM6 24h14v2h-14z"/><path id="g7a69T" d="M6 2h2v2h-2zM18 2h4v2h-4zM2 4h4v2h-4zM12 4h6v2h-6zM20 4h2v2h-2zM4 6h2v2h-2zM18 6h2v2h-2zM4 8h2v2h-2zM12 8h6v2h-6zM2 10h6v2h-6zM12 10h2v2h-2zM16 10h4v2h-4zM4 12h2v2h-2zM4 14h4v2h-4zM12 14h10v2h-10zM2 16h4v2h-4zM12 16h10v2h-10zM0 18h2v2h-2zM4 18h2v2h-2zM12 18h8v2h-8zM4 20h2v2h-2zM14 20h2v2h-2zM4 22h2v2h-2zM8 22h4v2h-4zM16 22h2v2h-2zM20 22h2v2h-2zM4 24h2v2h-2zM8 24h2v2h-2zM12 24h8v2h-8z"/><path id="g7a97" d="M10 2h2v2h-2zM2 4h20v2h-20zM2 6h2v2h-2zM8 6h2v2h-2zM14 6h2v2h-2zM20 6h2v2h-2zM6 8h2v2h-2zM16 8h4v2h-4zM2 10h4v2h-4zM10 10h2v2h-2zM20 10h2v2h-2zM4 12h16v2h-16zM4 14h2v2h-2zM8 14h8v2h-8zM18 14h2v2h-2zM4 16h4v2h-4zM14 16h2v2h-2zM18 16h2v2h-2zM4 18h2v2h-2zM10 18h4v2h-4zM18 18h2v2h-2zM4 20h2v2h-2zM10 20h2v2h-2zM14 20h2v2h-2zM18 20h2v2h-2zM4 22h2v2h-2zM8 22h2v2h-2zM18 22h2v2h-2zM4 24h16v2h-16z"/><path id="g7d78T" d="M4 0h2v2h-2zM12 0h10v2h-10zM4 2h2v2h-2zM10 2h2v2h-2zM20 2h2v2h-2zM2 4h2v2h-2zM8 4h4v2h-4zM20 4h2v2h-2zM2 6h2v2h-2zM6 6h2v2h-2zM12 6h10v2h-10zM4 8h2v2h-2zM10 8h2v2h-2zM20 8h2v2h-2zM4 10h2v2h-2zM8 10h2v2h-2zM12 10h10v2h-10zM2 12h2v2h-2zM8 12h4v2h-4zM20 12h2v2h-2zM4 14h4v2h-4zM12 14h10v2h-10zM2 16h2v2h-2zM6 16h2v2h-2zM12 16h2v2h-2zM16 16h2v2h-2zM0 18h2v2h-2zM4 18h2v2h-2zM8 18h2v2h-2zM12 18h2v2h-2zM16 18h2v2h-2zM0 20h2v2h-2zM4 20h2v2h-2zM12 20h2v2h-2zM16 20h2v2h-2zM20 20h2v2h-2zM10 22h2v2h-2zM18 22h4v2h-4z"/><path id="g7e3aT" d="M4 2h2v2h-2zM16 2h2v2h-2zM4 4h2v2h-2zM8 4h2v2h-2zM12 4h10v2h-10zM2 6h2v2h-2zM6 6h2v2h-2zM10 6h2v2h-2zM16 6h2v2h-2zM2 8h4v2h-4zM12 8h10v2h-10zM2 10h4v2h-4zM8 10h6v2h-6zM16 10h2v2h-2zM20 10h2v2h-2zM2 12h2v2h-2zM6 12h2v2h-2zM10 12h12v2h-12zM2 14h2v2h-2zM6 14h2v2h-2zM10 14h4v2h-4zM16 14h2v2h-2zM20 14h2v2h-2zM4 16h2v2h-2zM10 16h2v2h-2zM14 16h6v2h-6zM4 18h4v2h-4zM10 18h12v2h-12zM0 20h2v2h-2zM4 20h4v2h-4zM10 20h2v2h-2zM16 20h2v2h-2zM0 22h2v2h-2zM4 22h2v2h-2zM8 22h4v2h-4zM16 22h2v2h-2zM8 24h2v2h-2zM12 24h10v2h-10z"/><path id="g7eb4T" d="M18 2h4v2h-4zM4 4h2v2h-2zM10 4h8v2h-8zM2 6h2v2h-2zM14 6h2v2h-2zM2 8h2v2h-2zM6 8h2v2h-2zM14 8h2v2h-2zM0 10h2v2h-2zM4 10h4v2h-4zM14 10h2v2h-2zM2 12h4v2h-4zM10 12h12v2h-12zM2 14h2v2h-2zM14 14h2v2h-2zM2 16h6v2h-6zM14 16h2v2h-2zM14 18h2v2h-2zM8 20h2v2h-2zM14 20h2v2h-2zM2 22h6v2h-6zM14 22h2v2h-2zM10 24h12v2h-12z"/><path id="g7f16" d="M4 0h2v2h-2zM14 0h2v2h-2zM4 2h2v2h-2zM10 2h12v2h-12zM4 4h2v2h-2zM10 4h2v2h-2zM20 4h2v2h-2zM2 6h2v2h-2zM6 6h2v2h-2zM10 6h2v2h-2zM20 6h2v2h-2zM2 8h2v2h-2zM6 8h2v2h-2zM10 8h12v2h-12zM4 10h2v2h-2zM10 10h12v2h-12zM2 12h2v2h-2zM10 12h2v2h-2zM14 12h2v2h-2zM18 12h4v2h-4zM2 14h6v2h-6zM10 14h2v2h-2zM14 14h2v2h-2zM18 14h4v2h-4zM8 16h2v2h-2zM12 16h10v2h-10zM4 18h8v2h-8zM14 18h2v2h-2zM18 18h4v2h-4zM2 20h2v2h-2zM8 20h4v2h-4zM14 20h2v2h-2zM18 20h4v2h-4zM8 22h2v2h-2zM20 22h2v2h-2z"/><path id="g7f4aT" d="M6 2h2v2h-2zM4 4h6v2h-6zM12 4h8v2h-8zM2 6h8v2h-8zM12 6h2v2h-2zM18 6h2v2h-2zM2 8h8v2h-8zM4 10h4v2h-4zM14 10h6v2h-6zM2 12h8v2h-8zM16 12h2v2h-2zM4 14h4v2h-4zM12 14h4v2h-4zM18 14h4v2h-4zM4 16h2v2h-2zM2 18h2v2h-2zM6 18h12v2h-12zM4 20h16v2h-16zM4 22h2v2h-2zM10 22h2v2h-2zM18 22h2v2h-2zM6 24h4v2h-4zM12 24h8v2h-8z"/><path id="g81ea" d="M10 2h2v2h-2zM10 4h2v2h-2zM4 6h16v2h-16zM4 8h2v2h-2zM18 8h2v2h-2zM4 10h2v2h-2zM18 10h2v2h-2zM4 12h16v2h-16zM4 14h2v2h-2zM18 14h2v2h-2zM4 16h16v2h-16zM4 18h2v2h-2zM18 18h2v2h-2zM4 20h2v2h-2zM18 20h2v2h-2zM4 22h16v2h-16zM4 24h2v2h-2zM18 24h2v2h-2z"/><path id="g844fT" d="M2 4h20v2h-20zM6 6h2v2h-2zM14 6h2v2h-2zM4 8h2v2h-2zM12 8h2v2h-2zM10 10h10v2h-10zM6 12h16v2h-16zM2 14h4v2h-4zM8 14h12v2h-12zM12 16h2v2h-2zM4 18h2v2h-2zM8 18h14v2h-14zM4 20h2v2h-2zM12 20h2v2h-2zM2 22h2v2h-2zM6 22h16v2h-16zM2 24h2v2h-2z"/><path id="g8485T" d="M2 4h20v2h-20zM4 8h2v2h-2zM8 8h10v2h-10zM2 10h4v2h-4zM12 10h2v2h-2zM16 10h2v2h-2zM6 12h2v2h-2zM10 12h2v2h-2zM16 12h2v2h-2zM4 14h2v2h-2zM10 14h2v2h-2zM16 14h2v2h-2zM20 14h2v2h-2zM2 16h2v2h-2zM8 16h4v2h-4zM18 16h2v2h-2zM2 18h20v2h-20zM8 20h4v2h-4zM14 20h2v2h-2zM4 22h4v2h-4zM10 22h2v2h-2zM16 22h4v2h-4zM2 24h2v2h-2zM20 24h2v2h-2z"/><path id="g86ddT" d="M12 2h10v2h-10zM4 4h2v2h-2zM10 4h2v2h-2zM20 4h2v2h-2zM2 6h10v2h-10zM20 6h2v2h-2zM2 8h4v2h-4zM8 8h2v2h-2zM12 8h10v2h-10zM2 10h4v2h-4zM8 10h4v2h-4zM20 10h2v2h-2zM2 12h4v2h-4zM8 12h2v2h-2zM12 12h10v2h-10zM2 14h10v2h-10zM14 14h2v2h-2zM4 16h2v2h-2zM10 16h2v2h-2zM14 16h2v2h-2zM20 16h2v2h-2zM4 18h2v2h-2zM8 18h4v2h-4zM16 18h4v2h-4zM6 20h6v2h-6zM18 20h2v2h-2zM2 22h4v2h-4zM10 22h2v2h-2zM14 22h6v2h-6zM10 24h4v2h-4zM20 24h2v2h-2z"/><path id="g8819T" d="M4 2h2v2h-2zM14 2h2v2h-2zM4 4h2v2h-2zM10 4h4v2h-4zM16 4h6v2h-6zM2 6h6v2h-6zM10 6h2v2h-2zM20 6h2v2h-2zM0 8h2v2h-2zM4 8h4v2h-4zM14 8h4v2h-4zM0 10h2v2h-2zM4 10h4v2h-4zM10 10h4v2h-4zM16 10h4v2h-4zM0 12h2v2h-2zM4 12h4v2h-4zM10 12h6v2h-6zM2 14h6v2h-6zM10 14h2v2h-2zM14 14h8v2h-8zM4 16h2v2h-2zM10 16h12v2h-12zM4 18h4v2h-4zM10 18h12v2h-12zM4 20h4v2h-4zM10 20h2v2h-2zM20 20h2v2h-2zM2 22h2v2h-2zM8 22h2v2h-2zM12 22h8v2h-8zM10 24h4v2h-4zM20 24h2v2h-2z"/><path id="g89fcT" d="M2 4h6v2h-6zM12 4h8v2h-8zM2 6h2v2h-2zM6 6h2v2h-2zM10 6h2v2h-2zM14 6h4v2h-4zM20 6h2v2h-2zM0 8h2v2h-2zM6 8h2v2h-2zM12 8h10v2h-10zM2 10h4v2h-4zM8 10h2v2h-2zM2 12h4v2h-4zM8 12h14v2h-14zM2 14h20v2h-20zM2 16h4v2h-4zM8 16h14v2h-14zM2 18h8v2h-8zM12 18h8v2h-8zM2 20h4v2h-4zM8 20h2v2h-2zM12 20h8v2h-8zM0 22h2v2h-2zM8 22h2v2h-2zM14 22h4v2h-4zM8 24h8v2h-8zM18 24h4v2h-4z"/><path id="g8b05T" d="M12 2h2v2h-2zM4 4h2v2h-2zM10 4h12v2h-12zM2 6h10v2h-10zM14 6h2v2h-2zM18 6h4v2h-4zM10 8h2v2h-2zM14 8h2v2h-2zM18 8h4v2h-4zM2 10h6v2h-6zM12 10h6v2h-6zM20 10h2v2h-2zM2 12h6v2h-6zM12 12h2v2h-2zM20 12h2v2h-2zM10 14h2v2h-2zM2 16h6v2h-6zM10 16h12v2h-12zM2 18h2v2h-2zM8 18h4v2h-4zM14 18h2v2h-2zM18 18h4v2h-4zM2 20h2v2h-2zM6 20h2v2h-2zM10 20h2v2h-2zM14 20h2v2h-2zM18 20h4v2h-4zM2 22h2v2h-2zM6 22h2v2h-2zM12 22h2v2h-2zM16 22h2v2h-2zM20 22h2v2h-2zM2 24h6v2h-6zM10 24h2v2h-2zM18 24h4v2h-4z"/><path id="g8bd5" d="M4 0h2v2h-2zM16 0h4v2h-4zM4 2h4v2h-4zM16 2h2v2h-2zM20 2h2v2h-2zM8 4h16v2h-16zM16 6h2v2h-2zM2 8h4v2h-4zM16 8h2v2h-2zM4 10h2v2h-2zM16 10h2v2h-2zM4 12h2v2h-2zM10 12h8v2h-8zM4 14h2v2h-2zM12 14h2v2h-2zM16 14h2v2h-2zM4 16h2v2h-2zM12 16h2v2h-2zM16 16h2v2h-2zM4 18h2v2h-2zM8 18h2v2h-2zM12 18h4v2h-4zM18 18h2v2h-2zM22 18h2v2h-2zM4 20h10v2h-10zM18 20h4v2h-4zM20 22h2v2h-2z"/><path id="g8c03" d="M4 2h2v2h-2zM10 2h12v2h-12zM6 4h4v2h-4zM14 4h2v2h-2zM20 4h2v2h-2zM8 6h2v2h-2zM12 6h10v2h-10zM8 8h2v2h-2zM14 8h2v2h-2zM20 8h2v2h-2zM2 10h4v2h-4zM8 10h2v2h-2zM12 10h10v2h-10zM4 12h2v2h-2zM8 12h2v2h-2zM20 12h2v2h-2zM4 14h2v2h-2zM8 14h2v2h-2zM12 14h6v2h-6zM20 14h2v2h-2zM4 16h2v2h-2zM8 16h2v2h-2zM12 16h2v2h-2zM16 16h2v2h-2zM20 16h2v2h-2zM4 18h6v2h-6zM12 18h6v2h-6zM20 18h2v2h-2zM4 20h2v2h-2zM8 20h2v2h-2zM12 20h2v2h-2zM20 20h2v2h-2zM18 22h4v2h-4z"/><path id="g8d5fT" d="M4 0h2v2h-2zM16 2h2v2h-2zM20 2h2v2h-2zM4 4h6v2h-6zM12 4h8v2h-8zM4 6h4v2h-4zM14 6h2v2h-2zM18 6h2v2h-2zM4 8h4v2h-4zM10 8h2v2h-2zM14 8h2v2h-2zM18 8h2v2h-2zM2 10h2v2h-2zM10 10h6v2h-6zM20 10h2v2h-2zM4 12h16v2h-16zM4 14h2v2h-2zM18 14h2v2h-2zM4 16h2v2h-2zM10 16h2v2h-2zM18 16h2v2h-2zM4 18h2v2h-2zM10 18h4v2h-4zM18 18h2v2h-2zM8 20h2v2h-2zM14 20h4v2h-4zM2 22h6v2h-6zM18 22h4v2h-4z"/><path id="g8da4T" d="M16 2h2v2h-2zM4 4h2v2h-2zM12 4h10v2h-10zM2 6h10v2h-10zM20 6h2v2h-2zM4 8h2v2h-2zM2 10h8v2h-8zM12 10h10v2h-10zM4 12h2v2h-2zM14 12h2v2h-2zM2 14h4v2h-4zM12 14h10v2h-10zM2 16h2v2h-2zM6 16h8v2h-8zM20 16h2v2h-2zM2 18h4v2h-4zM12 18h2v2h-2zM20 18h2v2h-2zM2 20h4v2h-4zM14 20h8v2h-8zM0 22h2v2h-2zM6 22h2v2h-2zM8 24h14v2h-14z"/><path id="g8fd4" d="M18 2h4v2h-4zM2 4h4v2h-4zM10 4h8v2h-8zM4 6h2v2h-2zM10 6h2v2h-2zM10 8h12v2h-12zM8 10h2v2h-2zM18 10h2v2h-2zM2 12h4v2h-4zM8 12h2v2h-2zM12 12h2v2h-2zM18 12h2v2h-2zM4 14h2v2h-2zM8 14h2v2h-2zM14 14h2v2h-2zM18 14h2v2h-2zM4 16h2v2h-2zM8 16h2v2h-2zM16 16h2v2h-2zM4 18h2v2h-2zM8 18h2v2h-2zM14 18h2v2h-2zM18 18h2v2h-2zM4 20h2v2h-2zM10 20h4v2h-4zM20 20h2v2h-2zM2 22h6v2h-6zM8 24h14v2h-14z"/><path id="g8fd8T" d="M2 2h2v2h-2zM4 4h2v2h-2zM8 4h14v2h-14zM14 6h2v2h-2zM14 8h2v2h-2zM2 10h4v2h-4zM12 10h6v2h-6zM4 12h2v2h-2zM10 12h2v2h-2zM14 12h2v2h-2zM18 12h2v2h-2zM4 14h2v2h-2zM8 14h2v2h-2zM14 14h2v2h-2zM20 14h2v2h-2zM4 16h2v2h-2zM14 16h2v2h-2zM4 18h2v2h-2zM14 18h2v2h-2zM4 20h2v2h-2zM14 20h2v2h-2zM2 22h2v2h-2zM6 22h2v2h-2zM8 24h14v2h-14z"/><path id="g9009" d="M14 2h2v2h-2zM2 4h2v2h-2zM10 4h2v2h-2zM14 4h2v2h-2zM4 6h2v2h-2zM10 6h12v2h-12zM8 8h2v2h-2zM14 8h2v2h-2zM14 10h2v2h-2zM2 12h4v2h-4zM8 12h14v2h-14zM4 14h2v2h-2zM12 14h2v2h-2zM16 14h2v2h-2zM4 16h2v2h-2zM12 16h2v2h-2zM16 16h2v2h-2zM4 18h2v2h-2zM10 18h2v2h-2zM16 18h2v2h-2zM20 18h2v2h-2zM4 20h6v2h-6zM16 20h6v2h-6zM2 22h2v2h-2zM6 22h4v2h-4zM22 22h2v2h-2zM2 24h2v2h-2zM8 24h14v2h-14z"/><path id="g919cT" d="M2 2h8v2h-8zM4 4h4v2h-4zM12 4h10v2h-10zM4 6h4v2h-4zM10 6h2v2h-2zM14 6h2v2h-2zM20 6h2v2h-2zM2 8h10v2h-10zM14 8h2v2h-2zM20 8h2v2h-2zM2 10h20v2h-20zM2 12h2v2h-2zM6 12h6v2h-6zM14 12h2v2h-2zM20 12h2v2h-2zM2 14h2v2h-2zM6 14h4v2h-4zM12 14h10v2h-10zM2 16h2v2h-2zM8 16h2v2h-2zM14 16h2v2h-2zM18 16h2v2h-2zM2 18h8v2h-8zM14 18h4v2h-4zM20 18h2v2h-2zM2 20h2v2h-2zM8 20h2v2h-2zM12 20h4v2h-4zM18 20h4v2h-4zM2 22h8v2h-8zM12 22h4v2h-4zM10 24h2v2h-2zM16 24h6v2h-6z"/><path id="g91ca" d="M8 2h2v2h-2zM2 4h6v2h-6zM12 4h10v2h-10zM4 6h2v2h-2zM8 6h2v2h-2zM12 6h2v2h-2zM18 6h2v2h-2zM2 8h4v2h-4zM8 8h2v2h-2zM14 8h4v2h-4zM4 10h2v2h-2zM14 10h2v2h-2zM18 10h2v2h-2zM2 12h12v2h-12zM16 12h2v2h-2zM20 12h2v2h-2zM4 14h4v2h-4zM16 14h2v2h-2zM2 16h4v2h-4zM8 16h2v2h-2zM12 16h10v2h-10zM2 18h4v2h-4zM16 18h2v2h-2zM0 20h2v2h-2zM4 20h2v2h-2zM10 20h12v2h-12zM4 22h2v2h-2zM16 22h2v2h-2zM16 24h2v2h-2z"/><path id="g9737T" d="M6 2h12v2h-12zM2 4h20v2h-20zM2 6h2v2h-2zM6 6h2v2h-2zM10 6h2v2h-2zM16 6h2v2h-2zM20 6h2v2h-2zM6 8h2v2h-2zM16 8h2v2h-2zM10 10h12v2h-12zM2 12h6v2h-6zM10 12h12v2h-12zM2 14h2v2h-2zM6 14h2v2h-2zM12 14h8v2h-8zM2 16h6v2h-6zM12 16h8v2h-8zM2 18h2v2h-2zM6 18h2v2h-2zM10 18h12v2h-12zM2 20h8v2h-8zM12 20h2v2h-2zM16 20h2v2h-2zM20 20h2v2h-2zM10 22h2v2h-2zM14 22h2v2h-2zM18 22h2v2h-2z"/><path id="g9879" d="M2 4h6v2h-6zM10 4h12v2h-12zM4 6h2v2h-2zM14 6h2v2h-2zM4 8h2v2h-2zM10 8h12v2h-12zM4 10h2v2h-2zM10 10h2v2h-2zM20 10h2v2h-2zM4 12h2v2h-2zM10 12h2v2h-2zM14 12h2v2h-2zM20 12h2v2h-2zM4 14h2v2h-2zM10 14h2v2h-2zM14 14h2v2h-2zM20 14h2v2h-2zM4 16h2v2h-2zM10 16h2v2h-2zM14 16h2v2h-2zM20 16h2v2h-2zM2 18h6v2h-6zM10 18h2v2h-2zM14 18h2v2h-2zM20 18h2v2h-2zM14 20h2v2h-2zM12 22h2v2h-2zM18 22h4v2h-4zM8 24h4v2h-4zM20 24h2v2h-2z"/><path id="g9c7dT" d="M4 2h2v2h-2zM4 4h6v2h-6zM12 4h10v2h-10zM2 6h2v2h-2zM8 6h2v2h-2zM14 6h2v2h-2zM20 6h2v2h-2zM2 8h8v2h-8zM14 8h2v2h-2zM20 8h2v2h-2zM2 10h2v2h-2zM6 10h4v2h-4zM14 10h2v2h-2zM20 10h2v2h-2zM2 12h2v2h-2zM6 12h4v2h-4zM14 12h2v2h-2zM20 12h2v2h-2zM2 14h8v2h-8zM14 14h2v2h-2zM20 14h2v2h-2zM2 16h2v2h-2zM6 16h4v2h-4zM14 16h2v2h-2zM20 16h2v2h-2zM2 18h8v2h-8zM12 18h2v2h-2zM20 18h2v2h-2zM12 20h2v2h-2zM20 20h2v2h-2zM6 22h8v2h-8zM20 22h2v2h-2zM2 24h4v2h-4zM10 24h2v2h-2zM16 24h4v2h-4z"/><path id="g9e70T" d="M12 2h2v2h-2zM2 4h10v2h-10zM14 4h6v2h-6zM2 6h2v2h-2zM6 6h2v2h-2zM10 6h2v2h-2zM16 6h2v2h-2zM2 8h2v2h-2zM6 8h2v2h-2zM10 8h10v2h-10zM2 10h6v2h-6zM10 10h10v2h-10zM2 12h2v2h-2zM6 12h2v2h-2zM10 12h10v2h-10zM2 14h2v2h-2zM12 14h4v2h-4zM18 14h2v2h-2zM2 16h2v2h-2zM6 16h14v2h-14zM2 18h2v2h-2zM6 18h2v2h-2zM12 18h2v2h-2zM2 20h2v2h-2zM8 20h4v2h-4zM14 20h8v2h-8zM0 22h2v2h-2zM6 22h10v2h-10zM20 22h2v2h-2zM0 24h2v2h-2zM18 24h4v2h-4z"/><path id="g9f06T" d="M2 2h8v2h-8zM2 4h2v2h-2zM8 4h14v2h-14zM8 6h4v2h-4zM14 6h4v2h-4zM20 6h2v2h-2zM2 8h8v2h-8zM12 8h10v2h-10zM2 10h2v2h-2zM8 10h2v2h-2zM14 10h4v2h-4zM2 12h20v2h-20zM2 14h10v2h-10zM14 14h4v2h-4zM20 14h2v2h-2zM4 16h2v2h-2zM12 16h4v2h-4zM18 16h4v2h-4zM2 18h2v2h-2zM6 18h6v2h-6zM14 18h4v2h-4zM20 18h2v2h-2zM2 20h2v2h-2zM6 20h2v2h-2zM12 20h10v2h-10zM2 22h2v2h-2zM8 22h2v2h-2zM14 22h6v2h-6z"/></defs><use href="#g6587" x="48" y="59" fill="#000"/><use href="#g4ef6" x="72" y="59" fill="#000"/><use href="#g67e5" x="148" y="59" fill="#000"/><use href="#g770b" x="172" y="59" fill="#000"/><use href="#g8c03" x="248" y="59" fill="#000"/><use href="#g8bd5" x="272" y="59" fill="#000"/><use href="#g63d2" x="350" y="59" fill="#000"/><use href="#g4ef6" x="374" y="59" fill="#000"/><use href="#g9009" x="450" y="59" fill="#000"/><use href="#g9879" x="474" y="59" fill="#000"/><use href="#g7a97" x="550" y="59" fill="#000"/><use href="#g53e3" x="574" y="59" fill="#000"/><use href="#g5e2e" x="658" y="59" fill="#000"/><use href="#g52a9" x="682" y="59" fill="#000"/><use href="#g5730" x="6" y="146" fill="#000"/><use href="#g5740" x="30" y="146" fill="#000"/><use href="#g6570" x="161" y="146" fill="#000"/><use href="#g636e" x="185" y="146" fill="#000"/><use href="#g53cd" x="318" y="146" fill="#000"/><use href="#g6c47" x="342" y="146" fill="#000"/><use href="#g7f16" x="366" y="146" fill="#000"/><use href="#g6ce8" x="798" y="146" fill="#000"/><use href="#g91ca" x="822" y="146" fill="#000"/><use href="#g5bc4" x="1605" y="146" fill="#000"/><use href="#g5b58" x="1629" y="146" fill="#000"/><use href="#g5668" x="1653" y="146" fill="#000"/><use href="#g4f4d" x="1785" y="414" fill="#808080"/><use href="#g4f4d" x="1785" y="438" fill="#808080"/><use href="#g4f4d" x="1785" y="462" fill="#808080"/><use href="#g4f4d" x="1785" y="486" fill="#808080"/><use href="#g4f4d" x="1785" y="510" fill="#808080"/><use href="#g5730" x="6" y="888" fill="#000"/><use href="#g5740" x="30" y="888" fill="#000"/><use href="#g6570" x="161" y="888" fill="#000"/><use href="#g636e" x="185" y="888" fill="#000"/><use href="#g8fd4" x="1799" y="884" fill="#808080"/><use href="#g56de" x="1823" y="884" fill="#808080"/><use href="#g5230" x="1847" y="884" fill="#808080"/><use href="#g6765" x="2099" y="884" fill="#808080"/><use href="#g81ea" x="2123" y="884" fill="#808080"/><use href="#g8fd4" x="1799" y="1004" fill="#808080"/><use href="#g56de" x="1823" y="1004" fill="#808080"/><use href="#g5230" x="1847" y="1004" fill="#808080"/><use href="#g6765" x="2099" y="1004" fill="#808080"/><use href="#g81ea" x="2123" y="1004" fill="#808080"/><use href="#g8fd4" x="1799" y="1172" fill="#808080"/><use href="#g56de" x="1823" y="1172" fill="#808080"/><use href="#g5230" x="1847" y="1172" fill="#808080"/><use href="#g6765" x="2099" y="1172" fill="#808080"/><use href="#g81ea" x="2123" y="1172" fill="#808080"/><use href="#g8fd4" x="1799" y="1196" fill="#808080"/><use href="#g56de" x="1823" y="1196" fill="#808080"/><use href="#g5230" x="1847" y="1196" fill="#808080"/><use href="#g6765" x="2099" y="1196" fill="#808080"/><use href="#g81ea" x="2123" y="1196" fill="#808080"/><use href="#g547d" x="6" y="1362" fill="#000"/><use href="#g4ee4" x="30" y="1362" fill="#000"/><use href="#g6682" x="2220" y="1407" fill="#FF0000"/><use href="#g505c" x="2244" y="1407" fill="#FF0000"/><clipPath id="ascclip"><rect x="684" y="918" width="202" height="428"/></clipPath><g clip-path="url(#ascclip)"><use href="#g53e3T" x="702" y="916" fill="#000"/><use href="#g4e85T" x="726" y="916" fill="#000"/><use href="#g69beT" x="762" y="916" fill="#000"/><use href="#g844fT" x="810" y="916" fill="#000"/><use href="#g5008T" x="858" y="916" fill="#000"/><use href="#g5104T" x="702" y="940" fill="#000"/><use href="#g53e3T" x="726" y="940" fill="#000"/><use href="#g702dT" x="750" y="940" fill="#000"/><use href="#g9e70T" x="810" y="940" fill="#000"/><use href="#g8da4T" x="846" y="940" fill="#000"/><use href="#g9e70T" x="702" y="964" fill="#000"/><use href="#g8fd8T" x="726" y="964" fill="#000"/><use href="#g4e85T" x="750" y="964" fill="#000"/><use href="#g9e70T" x="798" y="964" fill="#000"/><use href="#g7f4aT" x="822" y="964" fill="#000"/><use href="#g6425T" x="702" y="988" fill="#000"/><use href="#g9e70T" x="762" y="988" fill="#000"/><use href="#g7eb4T" x="846" y="988" fill="#000"/><use href="#g8485T" x="690" y="1012" fill="#000"/><use href="#g9e70T" x="714" y="1012" fill="#000"/><use href="#g53e3T" x="738" y="1012" fill="#000"/><use href="#g9e70T" x="774" y="1012" fill="#000"/><use href="#g8d5fT" x="798" y="1012" fill="#000"/><use href="#g9e70T" x="822" y="1012" fill="#000"/><use href="#g8b05T" x="846" y="1012" fill="#000"/><use href="#g5104T" x="870" y="1012" fill="#000"/><use href="#g7d78T" x="702" y="1036" fill="#000"/><use href="#g9e70T" x="762" y="1036" fill="#000"/><use href="#g9e70T" x="810" y="1036" fill="#000"/><use href="#g9737T" x="834" y="1036" fill="#000"/><use href="#g9e70T" x="858" y="1036" fill="#000"/><use href="#g53e3T" x="702" y="1060" fill="#000"/><use href="#g755dT" x="762" y="1060" fill="#000"/><use href="#g744eT" x="810" y="1060" fill="#000"/><use href="#g4e85T" x="858" y="1060" fill="#000"/><use href="#g89fcT" x="702" y="1084" fill="#000"/><use href="#g9e70T" x="762" y="1084" fill="#000"/><use href="#g4e85T" x="798" y="1084" fill="#000"/><use href="#g9c7dT" x="834" y="1084" fill="#000"/><use href="#g919cT" x="702" y="1108" fill="#000"/><use href="#g919cT" x="750" y="1108" fill="#000"/><use href="#g6eceT" x="786" y="1108" fill="#000"/><use href="#g9f06T" x="702" y="1132" fill="#000"/><use href="#g53e3T" x="750" y="1132" fill="#000"/><use href="#g4e85T" x="774" y="1132" fill="#000"/><use href="#g4e85T" x="810" y="1132" fill="#000"/><use href="#g7e3aT" x="846" y="1132" fill="#000"/><use href="#g721bT" x="702" y="1156" fill="#000"/><use href="#g86ddT" x="750" y="1156" fill="#000"/><use href="#g5104T" x="798" y="1156" fill="#000"/><use href="#g6b8cT" x="834" y="1156" fill="#000"/><use href="#g5104T" x="702" y="1180" fill="#000"/><use href="#g8819T" x="726" y="1180" fill="#000"/><use href="#g53e3T" x="774" y="1180" fill="#000"/><use href="#g69beT" x="798" y="1180" fill="#000"/><use href="#g53e3T" x="834" y="1180" fill="#000"/><use href="#g69beT" x="858" y="1180" fill="#000"/><use href="#g7a69T" x="702" y="1204" fill="#000"/><use href="#g86ddT" x="750" y="1204" fill="#000"/></g></svg></body></html>
